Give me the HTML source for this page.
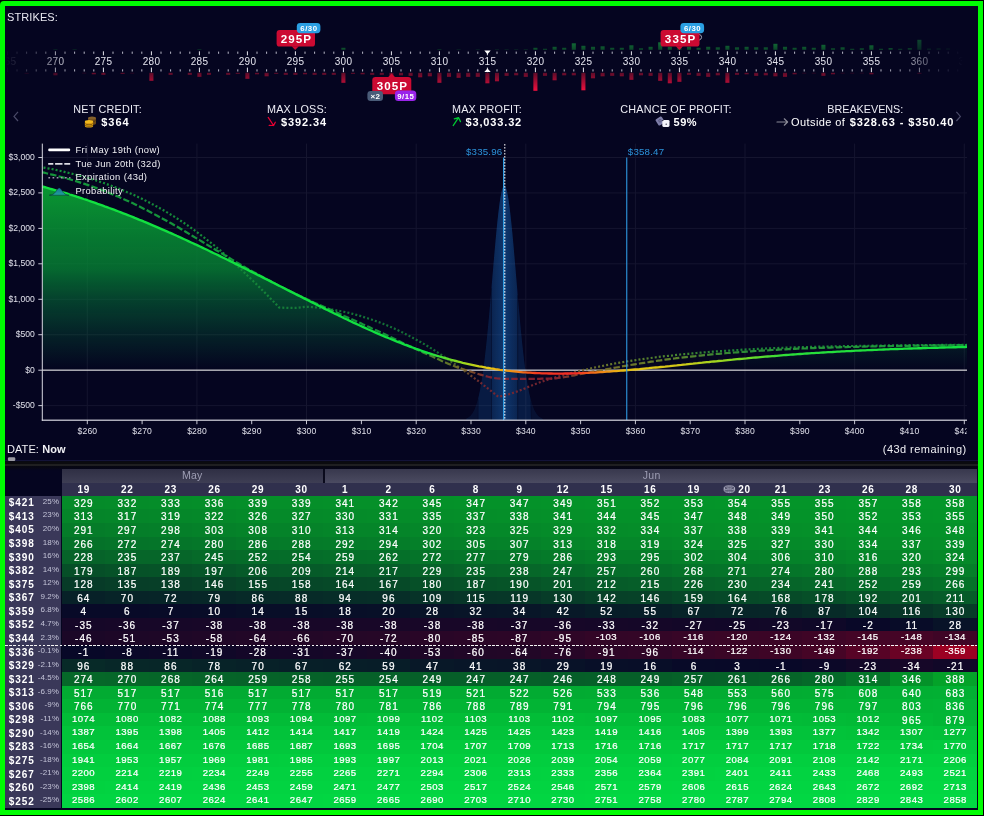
<!DOCTYPE html>
<html><head><meta charset="utf-8"><title>Strategy</title><style>
html,body{margin:0;padding:0;background:#000;}
body{width:984px;height:816px;overflow:hidden;position:relative;font-family:"Liberation Sans", sans-serif;color:#fff;}
#frame{position:absolute;left:0;top:1px;width:973px;height:804px;border:5px solid #00fd02;border-radius:4px 0 0 0;background:#050520;}
#top{position:absolute;left:0;top:0;}
.c{position:absolute;text-align:center;-webkit-text-stroke:.22px #fff;font-size:10px;letter-spacing:1.05px;text-indent:1px;white-space:nowrap;overflow:hidden;}
.c.s{font-size:9.6px;letter-spacing:.48px;text-indent:.48px;}
.rl{position:absolute;left:5.4px;width:56.1px;background:#3a3859;}
.rl b{position:absolute;left:3.4px;font-size:10px;letter-spacing:.95px;font-weight:bold;}
.rl i{position:absolute;right:2.4px;font-style:normal;font-size:8px;color:#c4c4d8;letter-spacing:.1px;}
.dh{position:absolute;text-align:center;font-weight:bold;font-size:10px;letter-spacing:.7px;text-indent:.7px;}
svg text{font-family:"Liberation Sans", sans-serif;}
#wrap{position:absolute;left:0;top:0;width:984px;height:816px;will-change:transform;transform:translateZ(0);}
</style></head><body><div id="frame"></div><div id="wrap">
<svg id="top" width="984" height="816" viewBox="0 0 984 816">
<defs>
<linearGradient id="rb" gradientUnits="userSpaceOnUse" x1="0" y1="72" x2="0" y2="91"><stop offset="0" stop-color="#5c0c29"/><stop offset="1" stop-color="#ff1040"/></linearGradient>
<linearGradient id="gb" gradientUnits="userSpaceOnUse" x1="0" y1="39" x2="0" y2="50"><stop offset="0" stop-color="#17853e"/><stop offset="1" stop-color="#0c4a2a"/></linearGradient>
<linearGradient id="fade" x1="0" y1="0" x2="1" y2="0"><stop offset="0" stop-color="#fff" stop-opacity="0"/><stop offset="0.075" stop-color="#fff" stop-opacity="1"/><stop offset="0.9" stop-color="#fff" stop-opacity="1"/><stop offset="0.985" stop-color="#fff" stop-opacity="0"/></linearGradient>
<mask id="fm" maskUnits="userSpaceOnUse" x="0" y="0" width="984" height="140"><rect x="5" y="0" width="973" height="140" fill="url(#fade)"/></mask>
</defs>
<text x="7" y="20.6" font-size="11" fill="#e8e8f0" letter-spacing="0.1">STRIKES:</text>
<g mask="url(#fm)">
<rect x="-21.90" y="51.6" width="1" height="2.2" fill="#b9b9c8"/>
<rect x="-21.90" y="69.3" width="1" height="2.2" fill="#b9b9c8"/>
<rect x="-12.30" y="51.6" width="1" height="2.2" fill="#b9b9c8"/>
<rect x="-12.30" y="69.3" width="1" height="2.2" fill="#b9b9c8"/>
<rect x="-2.70" y="51.6" width="1" height="2.2" fill="#b9b9c8"/>
<rect x="-2.70" y="69.3" width="1" height="2.2" fill="#b9b9c8"/>
<rect x="6.90" y="51.3" width="1" height="4" fill="#e6e6ee"/>
<rect x="6.90" y="67.6" width="1" height="4.6" fill="#e6e6ee"/>
<text x="7.60" y="65.2" font-size="10" text-anchor="middle" fill="#e4e4ee" letter-spacing="0.4">265</text>
<rect x="16.50" y="51.6" width="1" height="2.2" fill="#b9b9c8"/>
<rect x="16.50" y="69.3" width="1" height="2.2" fill="#b9b9c8"/>
<rect x="26.10" y="51.6" width="1" height="2.2" fill="#b9b9c8"/>
<rect x="26.10" y="69.3" width="1" height="2.2" fill="#b9b9c8"/>
<rect x="35.70" y="51.6" width="1" height="2.2" fill="#b9b9c8"/>
<rect x="35.70" y="69.3" width="1" height="2.2" fill="#b9b9c8"/>
<rect x="45.30" y="51.6" width="1" height="2.2" fill="#b9b9c8"/>
<rect x="45.30" y="69.3" width="1" height="2.2" fill="#b9b9c8"/>
<rect x="54.90" y="51.3" width="1" height="4" fill="#e6e6ee"/>
<rect x="54.90" y="67.6" width="1" height="4.6" fill="#e6e6ee"/>
<text x="55.60" y="65.2" font-size="10" text-anchor="middle" fill="#e4e4ee" letter-spacing="0.4">270</text>
<rect x="64.50" y="51.6" width="1" height="2.2" fill="#b9b9c8"/>
<rect x="64.50" y="69.3" width="1" height="2.2" fill="#b9b9c8"/>
<rect x="74.10" y="51.6" width="1" height="2.2" fill="#b9b9c8"/>
<rect x="74.10" y="69.3" width="1" height="2.2" fill="#b9b9c8"/>
<rect x="83.70" y="51.6" width="1" height="2.2" fill="#b9b9c8"/>
<rect x="83.70" y="69.3" width="1" height="2.2" fill="#b9b9c8"/>
<rect x="93.30" y="51.6" width="1" height="2.2" fill="#b9b9c8"/>
<rect x="93.30" y="69.3" width="1" height="2.2" fill="#b9b9c8"/>
<rect x="102.90" y="51.3" width="1" height="4" fill="#e6e6ee"/>
<rect x="102.90" y="67.6" width="1" height="4.6" fill="#e6e6ee"/>
<text x="103.60" y="65.2" font-size="10" text-anchor="middle" fill="#e4e4ee" letter-spacing="0.4">275</text>
<rect x="112.50" y="51.6" width="1" height="2.2" fill="#b9b9c8"/>
<rect x="112.50" y="69.3" width="1" height="2.2" fill="#b9b9c8"/>
<rect x="122.10" y="51.6" width="1" height="2.2" fill="#b9b9c8"/>
<rect x="122.10" y="69.3" width="1" height="2.2" fill="#b9b9c8"/>
<rect x="131.70" y="51.6" width="1" height="2.2" fill="#b9b9c8"/>
<rect x="131.70" y="69.3" width="1" height="2.2" fill="#b9b9c8"/>
<rect x="141.30" y="51.6" width="1" height="2.2" fill="#b9b9c8"/>
<rect x="141.30" y="69.3" width="1" height="2.2" fill="#b9b9c8"/>
<rect x="150.90" y="51.3" width="1" height="4" fill="#e6e6ee"/>
<rect x="150.90" y="67.6" width="1" height="4.6" fill="#e6e6ee"/>
<text x="151.60" y="65.2" font-size="10" text-anchor="middle" fill="#e4e4ee" letter-spacing="0.4">280</text>
<rect x="160.50" y="51.6" width="1" height="2.2" fill="#b9b9c8"/>
<rect x="160.50" y="69.3" width="1" height="2.2" fill="#b9b9c8"/>
<rect x="170.10" y="51.6" width="1" height="2.2" fill="#b9b9c8"/>
<rect x="170.10" y="69.3" width="1" height="2.2" fill="#b9b9c8"/>
<rect x="179.70" y="51.6" width="1" height="2.2" fill="#b9b9c8"/>
<rect x="179.70" y="69.3" width="1" height="2.2" fill="#b9b9c8"/>
<rect x="189.30" y="51.6" width="1" height="2.2" fill="#b9b9c8"/>
<rect x="189.30" y="69.3" width="1" height="2.2" fill="#b9b9c8"/>
<rect x="198.90" y="51.3" width="1" height="4" fill="#e6e6ee"/>
<rect x="198.90" y="67.6" width="1" height="4.6" fill="#e6e6ee"/>
<text x="199.60" y="65.2" font-size="10" text-anchor="middle" fill="#e4e4ee" letter-spacing="0.4">285</text>
<rect x="208.50" y="51.6" width="1" height="2.2" fill="#b9b9c8"/>
<rect x="208.50" y="69.3" width="1" height="2.2" fill="#b9b9c8"/>
<rect x="218.10" y="51.6" width="1" height="2.2" fill="#b9b9c8"/>
<rect x="218.10" y="69.3" width="1" height="2.2" fill="#b9b9c8"/>
<rect x="227.70" y="51.6" width="1" height="2.2" fill="#b9b9c8"/>
<rect x="227.70" y="69.3" width="1" height="2.2" fill="#b9b9c8"/>
<rect x="237.30" y="51.6" width="1" height="2.2" fill="#b9b9c8"/>
<rect x="237.30" y="69.3" width="1" height="2.2" fill="#b9b9c8"/>
<rect x="246.90" y="51.3" width="1" height="4" fill="#e6e6ee"/>
<rect x="246.90" y="67.6" width="1" height="4.6" fill="#e6e6ee"/>
<text x="247.60" y="65.2" font-size="10" text-anchor="middle" fill="#e4e4ee" letter-spacing="0.4">290</text>
<rect x="256.50" y="51.6" width="1" height="2.2" fill="#b9b9c8"/>
<rect x="256.50" y="69.3" width="1" height="2.2" fill="#b9b9c8"/>
<rect x="266.10" y="51.6" width="1" height="2.2" fill="#b9b9c8"/>
<rect x="266.10" y="69.3" width="1" height="2.2" fill="#b9b9c8"/>
<rect x="275.70" y="51.6" width="1" height="2.2" fill="#b9b9c8"/>
<rect x="275.70" y="69.3" width="1" height="2.2" fill="#b9b9c8"/>
<rect x="285.30" y="51.6" width="1" height="2.2" fill="#b9b9c8"/>
<rect x="285.30" y="69.3" width="1" height="2.2" fill="#b9b9c8"/>
<rect x="294.90" y="51.3" width="1" height="4" fill="#e6e6ee"/>
<rect x="294.90" y="67.6" width="1" height="4.6" fill="#e6e6ee"/>
<text x="295.60" y="65.2" font-size="10" text-anchor="middle" fill="#e4e4ee" letter-spacing="0.4">295</text>
<rect x="304.50" y="51.6" width="1" height="2.2" fill="#b9b9c8"/>
<rect x="304.50" y="69.3" width="1" height="2.2" fill="#b9b9c8"/>
<rect x="314.10" y="51.6" width="1" height="2.2" fill="#b9b9c8"/>
<rect x="314.10" y="69.3" width="1" height="2.2" fill="#b9b9c8"/>
<rect x="323.70" y="51.6" width="1" height="2.2" fill="#b9b9c8"/>
<rect x="323.70" y="69.3" width="1" height="2.2" fill="#b9b9c8"/>
<rect x="333.30" y="51.6" width="1" height="2.2" fill="#b9b9c8"/>
<rect x="333.30" y="69.3" width="1" height="2.2" fill="#b9b9c8"/>
<rect x="342.90" y="51.3" width="1" height="4" fill="#e6e6ee"/>
<rect x="342.90" y="67.6" width="1" height="4.6" fill="#e6e6ee"/>
<text x="343.60" y="65.2" font-size="10" text-anchor="middle" fill="#e4e4ee" letter-spacing="0.4">300</text>
<rect x="352.50" y="51.6" width="1" height="2.2" fill="#b9b9c8"/>
<rect x="352.50" y="69.3" width="1" height="2.2" fill="#b9b9c8"/>
<rect x="362.10" y="51.6" width="1" height="2.2" fill="#b9b9c8"/>
<rect x="362.10" y="69.3" width="1" height="2.2" fill="#b9b9c8"/>
<rect x="371.70" y="51.6" width="1" height="2.2" fill="#b9b9c8"/>
<rect x="371.70" y="69.3" width="1" height="2.2" fill="#b9b9c8"/>
<rect x="381.30" y="51.6" width="1" height="2.2" fill="#b9b9c8"/>
<rect x="381.30" y="69.3" width="1" height="2.2" fill="#b9b9c8"/>
<rect x="390.90" y="51.3" width="1" height="4" fill="#e6e6ee"/>
<rect x="390.90" y="67.6" width="1" height="4.6" fill="#e6e6ee"/>
<text x="391.60" y="65.2" font-size="10" text-anchor="middle" fill="#e4e4ee" letter-spacing="0.4">305</text>
<rect x="400.50" y="51.6" width="1" height="2.2" fill="#b9b9c8"/>
<rect x="400.50" y="69.3" width="1" height="2.2" fill="#b9b9c8"/>
<rect x="410.10" y="51.6" width="1" height="2.2" fill="#b9b9c8"/>
<rect x="410.10" y="69.3" width="1" height="2.2" fill="#b9b9c8"/>
<rect x="419.70" y="51.6" width="1" height="2.2" fill="#b9b9c8"/>
<rect x="419.70" y="69.3" width="1" height="2.2" fill="#b9b9c8"/>
<rect x="429.30" y="51.6" width="1" height="2.2" fill="#b9b9c8"/>
<rect x="429.30" y="69.3" width="1" height="2.2" fill="#b9b9c8"/>
<rect x="438.90" y="51.3" width="1" height="4" fill="#e6e6ee"/>
<rect x="438.90" y="67.6" width="1" height="4.6" fill="#e6e6ee"/>
<text x="439.60" y="65.2" font-size="10" text-anchor="middle" fill="#e4e4ee" letter-spacing="0.4">310</text>
<rect x="448.50" y="51.6" width="1" height="2.2" fill="#b9b9c8"/>
<rect x="448.50" y="69.3" width="1" height="2.2" fill="#b9b9c8"/>
<rect x="458.10" y="51.6" width="1" height="2.2" fill="#b9b9c8"/>
<rect x="458.10" y="69.3" width="1" height="2.2" fill="#b9b9c8"/>
<rect x="467.70" y="51.6" width="1" height="2.2" fill="#b9b9c8"/>
<rect x="467.70" y="69.3" width="1" height="2.2" fill="#b9b9c8"/>
<rect x="477.30" y="51.6" width="1" height="2.2" fill="#b9b9c8"/>
<rect x="477.30" y="69.3" width="1" height="2.2" fill="#b9b9c8"/>
<rect x="486.90" y="51.3" width="1" height="4" fill="#e6e6ee"/>
<rect x="486.90" y="67.6" width="1" height="4.6" fill="#e6e6ee"/>
<text x="487.60" y="65.2" font-size="10" text-anchor="middle" fill="#e4e4ee" letter-spacing="0.4">315</text>
<rect x="496.50" y="51.6" width="1" height="2.2" fill="#b9b9c8"/>
<rect x="496.50" y="69.3" width="1" height="2.2" fill="#b9b9c8"/>
<rect x="506.10" y="51.6" width="1" height="2.2" fill="#b9b9c8"/>
<rect x="506.10" y="69.3" width="1" height="2.2" fill="#b9b9c8"/>
<rect x="515.70" y="51.6" width="1" height="2.2" fill="#b9b9c8"/>
<rect x="515.70" y="69.3" width="1" height="2.2" fill="#b9b9c8"/>
<rect x="525.30" y="51.6" width="1" height="2.2" fill="#b9b9c8"/>
<rect x="525.30" y="69.3" width="1" height="2.2" fill="#b9b9c8"/>
<rect x="534.90" y="51.3" width="1" height="4" fill="#e6e6ee"/>
<rect x="534.90" y="67.6" width="1" height="4.6" fill="#e6e6ee"/>
<text x="535.60" y="65.2" font-size="10" text-anchor="middle" fill="#e4e4ee" letter-spacing="0.4">320</text>
<rect x="544.50" y="51.6" width="1" height="2.2" fill="#b9b9c8"/>
<rect x="544.50" y="69.3" width="1" height="2.2" fill="#b9b9c8"/>
<rect x="554.10" y="51.6" width="1" height="2.2" fill="#b9b9c8"/>
<rect x="554.10" y="69.3" width="1" height="2.2" fill="#b9b9c8"/>
<rect x="563.70" y="51.6" width="1" height="2.2" fill="#b9b9c8"/>
<rect x="563.70" y="69.3" width="1" height="2.2" fill="#b9b9c8"/>
<rect x="573.30" y="51.6" width="1" height="2.2" fill="#b9b9c8"/>
<rect x="573.30" y="69.3" width="1" height="2.2" fill="#b9b9c8"/>
<rect x="582.90" y="51.3" width="1" height="4" fill="#e6e6ee"/>
<rect x="582.90" y="67.6" width="1" height="4.6" fill="#e6e6ee"/>
<text x="583.60" y="65.2" font-size="10" text-anchor="middle" fill="#e4e4ee" letter-spacing="0.4">325</text>
<rect x="592.50" y="51.6" width="1" height="2.2" fill="#b9b9c8"/>
<rect x="592.50" y="69.3" width="1" height="2.2" fill="#b9b9c8"/>
<rect x="602.10" y="51.6" width="1" height="2.2" fill="#b9b9c8"/>
<rect x="602.10" y="69.3" width="1" height="2.2" fill="#b9b9c8"/>
<rect x="611.70" y="51.6" width="1" height="2.2" fill="#b9b9c8"/>
<rect x="611.70" y="69.3" width="1" height="2.2" fill="#b9b9c8"/>
<rect x="621.30" y="51.6" width="1" height="2.2" fill="#b9b9c8"/>
<rect x="621.30" y="69.3" width="1" height="2.2" fill="#b9b9c8"/>
<rect x="630.90" y="51.3" width="1" height="4" fill="#e6e6ee"/>
<rect x="630.90" y="67.6" width="1" height="4.6" fill="#e6e6ee"/>
<text x="631.60" y="65.2" font-size="10" text-anchor="middle" fill="#e4e4ee" letter-spacing="0.4">330</text>
<rect x="640.50" y="51.6" width="1" height="2.2" fill="#b9b9c8"/>
<rect x="640.50" y="69.3" width="1" height="2.2" fill="#b9b9c8"/>
<rect x="650.10" y="51.6" width="1" height="2.2" fill="#b9b9c8"/>
<rect x="650.10" y="69.3" width="1" height="2.2" fill="#b9b9c8"/>
<rect x="659.70" y="51.6" width="1" height="2.2" fill="#b9b9c8"/>
<rect x="659.70" y="69.3" width="1" height="2.2" fill="#b9b9c8"/>
<rect x="669.30" y="51.6" width="1" height="2.2" fill="#b9b9c8"/>
<rect x="669.30" y="69.3" width="1" height="2.2" fill="#b9b9c8"/>
<rect x="678.90" y="51.3" width="1" height="4" fill="#e6e6ee"/>
<rect x="678.90" y="67.6" width="1" height="4.6" fill="#e6e6ee"/>
<text x="679.60" y="65.2" font-size="10" text-anchor="middle" fill="#e4e4ee" letter-spacing="0.4">335</text>
<rect x="688.50" y="51.6" width="1" height="2.2" fill="#b9b9c8"/>
<rect x="688.50" y="69.3" width="1" height="2.2" fill="#b9b9c8"/>
<rect x="698.10" y="51.6" width="1" height="2.2" fill="#b9b9c8"/>
<rect x="698.10" y="69.3" width="1" height="2.2" fill="#b9b9c8"/>
<rect x="707.70" y="51.6" width="1" height="2.2" fill="#b9b9c8"/>
<rect x="707.70" y="69.3" width="1" height="2.2" fill="#b9b9c8"/>
<rect x="717.30" y="51.6" width="1" height="2.2" fill="#b9b9c8"/>
<rect x="717.30" y="69.3" width="1" height="2.2" fill="#b9b9c8"/>
<rect x="726.90" y="51.3" width="1" height="4" fill="#e6e6ee"/>
<rect x="726.90" y="67.6" width="1" height="4.6" fill="#e6e6ee"/>
<text x="727.60" y="65.2" font-size="10" text-anchor="middle" fill="#e4e4ee" letter-spacing="0.4">340</text>
<rect x="736.50" y="51.6" width="1" height="2.2" fill="#b9b9c8"/>
<rect x="736.50" y="69.3" width="1" height="2.2" fill="#b9b9c8"/>
<rect x="746.10" y="51.6" width="1" height="2.2" fill="#b9b9c8"/>
<rect x="746.10" y="69.3" width="1" height="2.2" fill="#b9b9c8"/>
<rect x="755.70" y="51.6" width="1" height="2.2" fill="#b9b9c8"/>
<rect x="755.70" y="69.3" width="1" height="2.2" fill="#b9b9c8"/>
<rect x="765.30" y="51.6" width="1" height="2.2" fill="#b9b9c8"/>
<rect x="765.30" y="69.3" width="1" height="2.2" fill="#b9b9c8"/>
<rect x="774.90" y="51.3" width="1" height="4" fill="#e6e6ee"/>
<rect x="774.90" y="67.6" width="1" height="4.6" fill="#e6e6ee"/>
<text x="775.60" y="65.2" font-size="10" text-anchor="middle" fill="#e4e4ee" letter-spacing="0.4">345</text>
<rect x="784.50" y="51.6" width="1" height="2.2" fill="#b9b9c8"/>
<rect x="784.50" y="69.3" width="1" height="2.2" fill="#b9b9c8"/>
<rect x="794.10" y="51.6" width="1" height="2.2" fill="#b9b9c8"/>
<rect x="794.10" y="69.3" width="1" height="2.2" fill="#b9b9c8"/>
<rect x="803.70" y="51.6" width="1" height="2.2" fill="#b9b9c8"/>
<rect x="803.70" y="69.3" width="1" height="2.2" fill="#b9b9c8"/>
<rect x="813.30" y="51.6" width="1" height="2.2" fill="#b9b9c8"/>
<rect x="813.30" y="69.3" width="1" height="2.2" fill="#b9b9c8"/>
<rect x="822.90" y="51.3" width="1" height="4" fill="#e6e6ee"/>
<rect x="822.90" y="67.6" width="1" height="4.6" fill="#e6e6ee"/>
<text x="823.60" y="65.2" font-size="10" text-anchor="middle" fill="#e4e4ee" letter-spacing="0.4">350</text>
<rect x="832.50" y="51.6" width="1" height="2.2" fill="#b9b9c8"/>
<rect x="832.50" y="69.3" width="1" height="2.2" fill="#b9b9c8"/>
<rect x="842.10" y="51.6" width="1" height="2.2" fill="#b9b9c8"/>
<rect x="842.10" y="69.3" width="1" height="2.2" fill="#b9b9c8"/>
<rect x="851.70" y="51.6" width="1" height="2.2" fill="#b9b9c8"/>
<rect x="851.70" y="69.3" width="1" height="2.2" fill="#b9b9c8"/>
<rect x="861.30" y="51.6" width="1" height="2.2" fill="#b9b9c8"/>
<rect x="861.30" y="69.3" width="1" height="2.2" fill="#b9b9c8"/>
<rect x="870.90" y="51.3" width="1" height="4" fill="#e6e6ee"/>
<rect x="870.90" y="67.6" width="1" height="4.6" fill="#e6e6ee"/>
<text x="871.60" y="65.2" font-size="10" text-anchor="middle" fill="#e4e4ee" letter-spacing="0.4">355</text>
<rect x="880.50" y="51.6" width="1" height="2.2" fill="#b9b9c8"/>
<rect x="880.50" y="69.3" width="1" height="2.2" fill="#b9b9c8"/>
<rect x="890.10" y="51.6" width="1" height="2.2" fill="#b9b9c8"/>
<rect x="890.10" y="69.3" width="1" height="2.2" fill="#b9b9c8"/>
<rect x="899.70" y="51.6" width="1" height="2.2" fill="#b9b9c8"/>
<rect x="899.70" y="69.3" width="1" height="2.2" fill="#b9b9c8"/>
<rect x="909.30" y="51.6" width="1" height="2.2" fill="#b9b9c8"/>
<rect x="909.30" y="69.3" width="1" height="2.2" fill="#b9b9c8"/>
<rect x="918.90" y="51.3" width="1" height="4" fill="#e6e6ee"/>
<rect x="918.90" y="67.6" width="1" height="4.6" fill="#e6e6ee"/>
<text x="919.60" y="65.2" font-size="10" text-anchor="middle" fill="#e4e4ee" letter-spacing="0.4">360</text>
<rect x="928.50" y="51.6" width="1" height="2.2" fill="#b9b9c8"/>
<rect x="928.50" y="69.3" width="1" height="2.2" fill="#b9b9c8"/>
<rect x="938.10" y="51.6" width="1" height="2.2" fill="#b9b9c8"/>
<rect x="938.10" y="69.3" width="1" height="2.2" fill="#b9b9c8"/>
<rect x="947.70" y="51.6" width="1" height="2.2" fill="#b9b9c8"/>
<rect x="947.70" y="69.3" width="1" height="2.2" fill="#b9b9c8"/>
<rect x="957.30" y="51.6" width="1" height="2.2" fill="#b9b9c8"/>
<rect x="957.30" y="69.3" width="1" height="2.2" fill="#b9b9c8"/>
<rect x="966.90" y="51.3" width="1" height="4" fill="#e6e6ee"/>
<rect x="966.90" y="67.6" width="1" height="4.6" fill="#e6e6ee"/>
<text x="967.60" y="65.2" font-size="10" text-anchor="middle" fill="#e4e4ee" letter-spacing="0.4">365</text>
<rect x="976.50" y="51.6" width="1" height="2.2" fill="#b9b9c8"/>
<rect x="976.50" y="69.3" width="1" height="2.2" fill="#b9b9c8"/>
<rect x="986.10" y="51.6" width="1" height="2.2" fill="#b9b9c8"/>
<rect x="986.10" y="69.3" width="1" height="2.2" fill="#b9b9c8"/>
<rect x="995.70" y="51.6" width="1" height="2.2" fill="#b9b9c8"/>
<rect x="995.70" y="69.3" width="1" height="2.2" fill="#b9b9c8"/>
<rect x="1005.30" y="51.6" width="1" height="2.2" fill="#b9b9c8"/>
<rect x="1005.30" y="69.3" width="1" height="2.2" fill="#b9b9c8"/>
<rect x="1014.90" y="51.3" width="1" height="4" fill="#e6e6ee"/>
<rect x="1014.90" y="67.6" width="1" height="4.6" fill="#e6e6ee"/>
<text x="1015.60" y="65.2" font-size="10" text-anchor="middle" fill="#e4e4ee" letter-spacing="0.4">370</text>
<rect x="24.55" y="72.8" width="4.1" height="1.0" fill="url(#rb)" opacity="0.95"/>
<rect x="53.35" y="72.8" width="4.1" height="2.5" fill="url(#rb)" opacity="0.95"/>
<rect x="82.15" y="72.8" width="4.1" height="0.5" fill="url(#rb)" opacity="0.60"/>
<rect x="91.75" y="72.8" width="4.1" height="1.5" fill="url(#rb)" opacity="0.95"/>
<rect x="101.35" y="72.8" width="4.1" height="2.0" fill="url(#rb)" opacity="0.95"/>
<rect x="120.55" y="72.8" width="4.1" height="1.0" fill="url(#rb)" opacity="0.95"/>
<rect x="130.15" y="72.8" width="4.1" height="0.6" fill="url(#rb)" opacity="0.60"/>
<rect x="149.35" y="72.8" width="4.1" height="8.0" fill="url(#rb)" opacity="0.95"/>
<rect x="168.55" y="72.8" width="4.1" height="2.0" fill="url(#rb)" opacity="0.95"/>
<rect x="187.75" y="72.8" width="4.1" height="2.0" fill="url(#rb)" opacity="0.95"/>
<rect x="197.35" y="72.8" width="4.1" height="4.0" fill="url(#rb)" opacity="0.95"/>
<rect x="206.95" y="72.8" width="4.1" height="2.0" fill="url(#rb)" opacity="0.95"/>
<rect x="226.15" y="72.8" width="4.1" height="2.0" fill="url(#rb)" opacity="0.95"/>
<rect x="235.75" y="72.8" width="4.1" height="1.0" fill="url(#rb)" opacity="0.95"/>
<rect x="245.35" y="72.8" width="4.1" height="6.0" fill="url(#rb)" opacity="0.95"/>
<rect x="254.95" y="72.8" width="4.1" height="1.5" fill="url(#rb)" opacity="0.95"/>
<rect x="264.55" y="72.8" width="4.1" height="3.5" fill="url(#rb)" opacity="0.95"/>
<rect x="274.15" y="72.8" width="4.1" height="1.0" fill="url(#rb)" opacity="0.95"/>
<rect x="283.75" y="72.8" width="4.1" height="2.0" fill="url(#rb)" opacity="0.95"/>
<rect x="293.35" y="72.8" width="4.1" height="2.0" fill="url(#rb)" opacity="0.95"/>
<rect x="302.95" y="72.8" width="4.1" height="1.5" fill="url(#rb)" opacity="0.95"/>
<rect x="312.55" y="72.8" width="4.1" height="2.0" fill="url(#rb)" opacity="0.95"/>
<rect x="322.15" y="72.8" width="4.1" height="2.0" fill="url(#rb)" opacity="0.95"/>
<rect x="331.75" y="72.8" width="4.1" height="2.0" fill="url(#rb)" opacity="0.95"/>
<rect x="341.35" y="72.8" width="4.1" height="10.0" fill="url(#rb)" opacity="0.95"/>
<rect x="350.95" y="72.8" width="4.1" height="1.0" fill="url(#rb)" opacity="0.95"/>
<rect x="360.55" y="72.8" width="4.1" height="1.5" fill="url(#rb)" opacity="0.95"/>
<rect x="370.15" y="72.8" width="4.1" height="2.0" fill="url(#rb)" opacity="0.95"/>
<rect x="379.75" y="72.8" width="4.1" height="2.0" fill="url(#rb)" opacity="0.95"/>
<rect x="389.35" y="72.8" width="4.1" height="3.0" fill="url(#rb)" opacity="0.95"/>
<rect x="398.95" y="72.8" width="4.1" height="2.5" fill="url(#rb)" opacity="0.95"/>
<rect x="408.55" y="72.8" width="4.1" height="3.0" fill="url(#rb)" opacity="0.95"/>
<rect x="418.15" y="72.8" width="4.1" height="4.5" fill="url(#rb)" opacity="0.95"/>
<rect x="427.75" y="72.8" width="4.1" height="3.5" fill="url(#rb)" opacity="0.95"/>
<rect x="437.35" y="72.8" width="4.1" height="10.0" fill="url(#rb)" opacity="0.95"/>
<rect x="446.95" y="72.8" width="4.1" height="4.0" fill="url(#rb)" opacity="0.95"/>
<rect x="456.55" y="72.8" width="4.1" height="5.0" fill="url(#rb)" opacity="0.95"/>
<rect x="466.15" y="72.8" width="4.1" height="4.0" fill="url(#rb)" opacity="0.95"/>
<rect x="475.75" y="72.8" width="4.1" height="4.0" fill="url(#rb)" opacity="0.95"/>
<rect x="485.35" y="72.8" width="4.1" height="10.5" fill="url(#rb)" opacity="0.95"/>
<rect x="494.95" y="72.8" width="4.1" height="8.5" fill="url(#rb)" opacity="0.95"/>
<rect x="504.55" y="72.8" width="4.1" height="3.0" fill="url(#rb)" opacity="0.95"/>
<rect x="514.15" y="72.8" width="4.1" height="2.5" fill="url(#rb)" opacity="0.95"/>
<rect x="523.75" y="72.8" width="4.1" height="4.0" fill="url(#rb)" opacity="0.95"/>
<rect x="533.35" y="72.8" width="4.1" height="18.0" fill="url(#rb)" opacity="0.95"/>
<rect x="542.95" y="72.8" width="4.1" height="3.0" fill="url(#rb)" opacity="0.95"/>
<rect x="552.55" y="72.8" width="4.1" height="7.5" fill="url(#rb)" opacity="0.95"/>
<rect x="562.15" y="72.8" width="4.1" height="2.5" fill="url(#rb)" opacity="0.95"/>
<rect x="571.75" y="72.8" width="4.1" height="2.5" fill="url(#rb)" opacity="0.95"/>
<rect x="581.35" y="72.8" width="4.1" height="17.5" fill="url(#rb)" opacity="0.95"/>
<rect x="590.95" y="72.8" width="4.1" height="5.5" fill="url(#rb)" opacity="0.95"/>
<rect x="600.55" y="72.8" width="4.1" height="3.5" fill="url(#rb)" opacity="0.95"/>
<rect x="610.15" y="72.8" width="4.1" height="3.0" fill="url(#rb)" opacity="0.95"/>
<rect x="619.75" y="72.8" width="4.1" height="3.5" fill="url(#rb)" opacity="0.95"/>
<rect x="629.35" y="72.8" width="4.1" height="7.0" fill="url(#rb)" opacity="0.95"/>
<rect x="638.95" y="72.8" width="4.1" height="2.5" fill="url(#rb)" opacity="0.95"/>
<rect x="648.55" y="72.8" width="4.1" height="3.0" fill="url(#rb)" opacity="0.95"/>
<rect x="658.15" y="72.8" width="4.1" height="8.0" fill="url(#rb)" opacity="0.95"/>
<rect x="667.75" y="72.8" width="4.1" height="10.5" fill="url(#rb)" opacity="0.95"/>
<rect x="677.35" y="72.8" width="4.1" height="9.0" fill="url(#rb)" opacity="0.95"/>
<rect x="686.95" y="72.8" width="4.1" height="2.0" fill="url(#rb)" opacity="0.95"/>
<rect x="696.55" y="72.8" width="4.1" height="3.0" fill="url(#rb)" opacity="0.95"/>
<rect x="706.15" y="72.8" width="4.1" height="4.0" fill="url(#rb)" opacity="0.95"/>
<rect x="715.75" y="72.8" width="4.1" height="2.5" fill="url(#rb)" opacity="0.95"/>
<rect x="725.35" y="72.8" width="4.1" height="10.0" fill="url(#rb)" opacity="0.95"/>
<rect x="734.95" y="72.8" width="4.1" height="2.0" fill="url(#rb)" opacity="0.95"/>
<rect x="744.55" y="72.8" width="4.1" height="1.5" fill="url(#rb)" opacity="0.95"/>
<rect x="754.15" y="72.8" width="4.1" height="3.0" fill="url(#rb)" opacity="0.95"/>
<rect x="763.75" y="72.8" width="4.1" height="2.5" fill="url(#rb)" opacity="0.95"/>
<rect x="773.35" y="72.8" width="4.1" height="3.5" fill="url(#rb)" opacity="0.95"/>
<rect x="782.95" y="72.8" width="4.1" height="4.0" fill="url(#rb)" opacity="0.95"/>
<rect x="792.55" y="72.8" width="4.1" height="1.5" fill="url(#rb)" opacity="0.95"/>
<rect x="802.15" y="72.8" width="4.1" height="0.6" fill="url(#rb)" opacity="0.60"/>
<rect x="811.75" y="72.8" width="4.1" height="0.6" fill="url(#rb)" opacity="0.60"/>
<rect x="821.35" y="72.8" width="4.1" height="3.0" fill="url(#rb)" opacity="0.95"/>
<rect x="830.95" y="72.8" width="4.1" height="1.5" fill="url(#rb)" opacity="0.95"/>
<rect x="840.55" y="72.8" width="4.1" height="0.6" fill="url(#rb)" opacity="0.60"/>
<rect x="850.15" y="72.8" width="4.1" height="0.6" fill="url(#rb)" opacity="0.60"/>
<rect x="859.75" y="72.8" width="4.1" height="0.5" fill="url(#rb)" opacity="0.60"/>
<rect x="869.35" y="72.8" width="4.1" height="1.5" fill="url(#rb)" opacity="0.95"/>
<rect x="917.35" y="72.8" width="4.1" height="1.0" fill="url(#rb)" opacity="0.95"/>
<rect x="53.35" y="49.0" width="4.1" height="0.8" fill="url(#gb)" opacity="0.60"/>
<rect x="72.55" y="49.2" width="4.1" height="0.6" fill="url(#gb)" opacity="0.60"/>
<rect x="197.35" y="49.0" width="4.1" height="0.8" fill="url(#gb)" opacity="0.60"/>
<rect x="341.35" y="47.8" width="4.1" height="2.0" fill="url(#gb)" opacity="0.95"/>
<rect x="437.35" y="49.0" width="4.1" height="0.8" fill="url(#gb)" opacity="0.60"/>
<rect x="456.55" y="49.3" width="4.1" height="0.5" fill="url(#gb)" opacity="0.60"/>
<rect x="475.75" y="49.3" width="4.1" height="0.5" fill="url(#gb)" opacity="0.60"/>
<rect x="494.95" y="49.3" width="4.1" height="0.5" fill="url(#gb)" opacity="0.60"/>
<rect x="504.55" y="49.3" width="4.1" height="0.5" fill="url(#gb)" opacity="0.60"/>
<rect x="514.15" y="49.3" width="4.1" height="0.5" fill="url(#gb)" opacity="0.60"/>
<rect x="523.75" y="49.2" width="4.1" height="0.6" fill="url(#gb)" opacity="0.60"/>
<rect x="533.35" y="47.8" width="4.1" height="2.0" fill="url(#gb)" opacity="0.95"/>
<rect x="542.95" y="48.8" width="4.1" height="1.0" fill="url(#gb)" opacity="0.95"/>
<rect x="552.55" y="46.8" width="4.1" height="3.0" fill="url(#gb)" opacity="0.95"/>
<rect x="562.15" y="47.8" width="4.1" height="2.0" fill="url(#gb)" opacity="0.95"/>
<rect x="571.75" y="43.3" width="4.1" height="6.5" fill="url(#gb)" opacity="0.95"/>
<rect x="581.35" y="45.8" width="4.1" height="4.0" fill="url(#gb)" opacity="0.95"/>
<rect x="590.95" y="46.8" width="4.1" height="3.0" fill="url(#gb)" opacity="0.95"/>
<rect x="600.55" y="46.3" width="4.1" height="3.5" fill="url(#gb)" opacity="0.95"/>
<rect x="610.15" y="47.8" width="4.1" height="2.0" fill="url(#gb)" opacity="0.95"/>
<rect x="619.75" y="47.8" width="4.1" height="2.0" fill="url(#gb)" opacity="0.95"/>
<rect x="629.35" y="45.3" width="4.1" height="4.5" fill="url(#gb)" opacity="0.95"/>
<rect x="638.95" y="48.3" width="4.1" height="1.5" fill="url(#gb)" opacity="0.95"/>
<rect x="648.55" y="46.8" width="4.1" height="3.0" fill="url(#gb)" opacity="0.95"/>
<rect x="658.15" y="42.3" width="4.1" height="7.5" fill="url(#gb)" opacity="0.95"/>
<rect x="667.75" y="46.8" width="4.1" height="3.0" fill="url(#gb)" opacity="0.95"/>
<rect x="677.35" y="46.8" width="4.1" height="3.0" fill="url(#gb)" opacity="0.95"/>
<rect x="686.95" y="46.8" width="4.1" height="3.0" fill="url(#gb)" opacity="0.95"/>
<rect x="696.55" y="47.8" width="4.1" height="2.0" fill="url(#gb)" opacity="0.95"/>
<rect x="706.15" y="46.8" width="4.1" height="3.0" fill="url(#gb)" opacity="0.95"/>
<rect x="715.75" y="47.3" width="4.1" height="2.5" fill="url(#gb)" opacity="0.95"/>
<rect x="725.35" y="45.8" width="4.1" height="4.0" fill="url(#gb)" opacity="0.95"/>
<rect x="734.95" y="47.3" width="4.1" height="2.5" fill="url(#gb)" opacity="0.95"/>
<rect x="744.55" y="46.8" width="4.1" height="3.0" fill="url(#gb)" opacity="0.95"/>
<rect x="754.15" y="47.3" width="4.1" height="2.5" fill="url(#gb)" opacity="0.95"/>
<rect x="763.75" y="47.3" width="4.1" height="2.5" fill="url(#gb)" opacity="0.95"/>
<rect x="773.35" y="43.8" width="4.1" height="6.0" fill="url(#gb)" opacity="0.95"/>
<rect x="782.95" y="46.8" width="4.1" height="3.0" fill="url(#gb)" opacity="0.95"/>
<rect x="792.55" y="47.8" width="4.1" height="2.0" fill="url(#gb)" opacity="0.95"/>
<rect x="802.15" y="46.8" width="4.1" height="3.0" fill="url(#gb)" opacity="0.95"/>
<rect x="811.75" y="47.8" width="4.1" height="2.0" fill="url(#gb)" opacity="0.95"/>
<rect x="821.35" y="44.8" width="4.1" height="5.0" fill="url(#gb)" opacity="0.95"/>
<rect x="830.95" y="48.3" width="4.1" height="1.5" fill="url(#gb)" opacity="0.95"/>
<rect x="840.55" y="47.3" width="4.1" height="2.5" fill="url(#gb)" opacity="0.95"/>
<rect x="850.15" y="48.8" width="4.1" height="1.0" fill="url(#gb)" opacity="0.95"/>
<rect x="859.75" y="48.3" width="4.1" height="1.5" fill="url(#gb)" opacity="0.95"/>
<rect x="869.35" y="45.3" width="4.1" height="4.5" fill="url(#gb)" opacity="0.95"/>
<rect x="878.95" y="48.8" width="4.1" height="1.0" fill="url(#gb)" opacity="0.95"/>
<rect x="888.55" y="48.0" width="4.1" height="1.8" fill="url(#gb)" opacity="0.95"/>
<rect x="898.15" y="48.8" width="4.1" height="1.0" fill="url(#gb)" opacity="0.95"/>
<rect x="907.75" y="48.0" width="4.1" height="1.8" fill="url(#gb)" opacity="0.95"/>
<rect x="917.35" y="39.8" width="4.1" height="10.0" fill="url(#gb)" opacity="0.95"/>
<rect x="926.95" y="48.6" width="4.1" height="1.2" fill="url(#gb)" opacity="0.95"/>
<rect x="936.55" y="48.3" width="4.1" height="1.5" fill="url(#gb)" opacity="0.95"/>
<rect x="946.15" y="48.3" width="4.1" height="1.5" fill="url(#gb)" opacity="0.95"/>
<rect x="955.75" y="49.0" width="4.1" height="0.8" fill="url(#gb)" opacity="0.60"/>
</g>
<path d="M484.3 50.6h6.4l-3.2 3.6z" fill="#fff"/>
<path d="M484.3 72h6.4l-3.2-3.6z" fill="#fff"/>
<path d="M291.6 46.3h7.2l-3.6 3.7z" fill="#cc0a32"/>
<rect x="276.6" y="30.0" width="38.4" height="16.6" rx="3.2" fill="#cc0a32"/>
<text x="296.4" y="42.6" font-size="11.6" text-anchor="middle" fill="#fff" font-weight="bold" letter-spacing="1.10">295P</text>
<rect x="296.8" y="23.0" width="23.6" height="10.2" rx="3.4" fill="#2a9fe2"/>
<text x="308.9" y="30.9" font-size="7.8" text-anchor="middle" fill="#fff" font-weight="bold" letter-spacing="0.50">6/30</text>
<path d="M699 34.4q2.8.5 2.6 3-.2 2-2.6 2.8" stroke="#b4b4c4" stroke-width=".9" fill="none"/>
<path d="M675.8 46.3h7.2l-3.6 3.7z" fill="#cc0a32"/>
<rect x="660.6" y="30.0" width="38.9" height="16.6" rx="3.2" fill="#cc0a32"/>
<text x="680.6" y="42.6" font-size="11.6" text-anchor="middle" fill="#fff" font-weight="bold" letter-spacing="1.10">335P</text>
<rect x="680.4" y="23.0" width="23.7" height="10.2" rx="3.4" fill="#2a9fe2"/>
<text x="692.5" y="30.9" font-size="7.8" text-anchor="middle" fill="#fff" font-weight="bold" letter-spacing="0.50">6/30</text>
<path d="M388 77.3h7.2l-3.6-3.7z" fill="#cc0a32"/>
<rect x="372.3" y="77.0" width="39.0" height="17.2" rx="3.2" fill="#cc0a32"/>
<text x="392.4" y="89.7" font-size="11.6" text-anchor="middle" fill="#fff" font-weight="bold" letter-spacing="1.10">305P</text>
<rect x="367.4" y="91.1" width="15.6" height="9.9" rx="3.3" fill="#4a5c78"/>
<text x="375.3" y="98.8" font-size="8.0" text-anchor="middle" fill="#fff" font-weight="bold" letter-spacing="0.30">×2</text>
<rect x="394.9" y="90.6" width="21.4" height="10.5" rx="3.5" fill="#9a24ea"/>
<text x="405.8" y="98.7" font-size="7.8" text-anchor="middle" fill="#fff" font-weight="bold" letter-spacing="0.45">9/15</text>
<text x="107.6" y="113.1" font-size="10.8" text-anchor="middle" fill="#ececf4" letter-spacing="0.20">NET CREDIT:</text>
<text x="297.0" y="113.1" font-size="10.8" text-anchor="middle" fill="#ececf4" letter-spacing="0.20">MAX LOSS:</text>
<text x="487.0" y="113.1" font-size="10.8" text-anchor="middle" fill="#ececf4" letter-spacing="0.20">MAX PROFIT:</text>
<text x="676.0" y="113.1" font-size="10.8" text-anchor="middle" fill="#ececf4" letter-spacing="0.20">CHANCE OF PROFIT:</text>
<text x="865.3" y="113.1" font-size="10.8" text-anchor="middle" fill="#ececf4" letter-spacing="-0.02">BREAKEVENS:</text>
<text x="101.2" y="126.4" font-size="11" font-weight="bold" fill="#fff" letter-spacing="1">$364</text>
<text x="281" y="126.4" font-size="11" font-weight="bold" fill="#fff" letter-spacing="0.9">$392.34</text>
<text x="465.5" y="126.4" font-size="11" font-weight="bold" fill="#fff" letter-spacing="0.85">$3,033.32</text>
<text x="673.6" y="126.4" font-size="11" font-weight="bold" fill="#fff" letter-spacing="0.5">59%</text>
<text x="791" y="126.4" font-size="11" fill="#fff" letter-spacing="0.42">Outside of <tspan font-weight="bold" letter-spacing="0.9" dx="0.8">$328.63 - $350.40</tspan></text>
<g transform="translate(84.6,116.2)"><rect x="3.4" y="1.8" width="8" height="5.2" fill="#6a4818"/><ellipse cx="7.4" cy="7" rx="4" ry="1.6" fill="#6a4818"/><ellipse cx="7.4" cy="1.8" rx="4" ry="1.6" fill="#84602a"/><path d="M3.4 3.9a4 1.6 0 0 0 8 0" stroke="#4a3210" stroke-width=".6" fill="none"/><rect x=".3" y="5.3" width="8.2" height="4.6" fill="#dc9c10"/><ellipse cx="4.4" cy="9.9" rx="4.1" ry="1.5" fill="#dc9c10"/><ellipse cx="4.4" cy="5.3" rx="4.1" ry="1.5" fill="#f2ba1e"/><path d="M.3 7a4.1 1.5 0 0 0 8.2 0M.3 8.6a4.1 1.5 0 0 0 8.2 0" stroke="#6e4e08" stroke-width=".7" fill="none"/></g>
<path d="M268.2 117.4L273.6 125.5M269.2 125.4L273.6 125.5L275.3 122.2" stroke="#e60032" stroke-width="1.25" fill="none" stroke-linecap="round" stroke-linejoin="round"/>
<path d="M453.2 125.6L458.5 117.6M454.3 118.9L458.5 117.6L460.5 121.6" stroke="#00c832" stroke-width="1.25" fill="none" stroke-linecap="round" stroke-linejoin="round"/>
<g><rect x="-3.6" y="-3.6" width="7.2" height="7.2" rx="1.1" fill="#7d7da8" transform="translate(660.1,121) rotate(-32)"/><circle cx="660" cy="120.8" r="1.3" fill="none" stroke="#4c4c74" stroke-width=".7"/><rect x="662.3" y="119.9" width="7.2" height="7" rx="1.3" fill="#f4f4fa"/><path d="M662.3 121.4l1.6-1.5h-1.6z" fill="#050520"/><circle cx="666.2" cy="124.2" r=".65" fill="#1a1a30"/></g>
<path d="M777 122h10.4M784.3 118.8l3.3 3.2-3.3 3.2" stroke="#8c8c98" stroke-width="1.2" fill="none" stroke-linecap="round" stroke-linejoin="round"/>
<path d="M18 111.8l-4 4.6 4 4.6" stroke="#4a4a68" stroke-width="1.2" fill="none"/>
<path d="M956.4 111.8l4 4.6-4 4.6" stroke="#4a4a68" stroke-width="1.2" fill="none"/>
<rect x="42.3" y="157.0" width="924.7" height="1" fill="#15152f"/>
<rect x="38.3" y="157.0" width="4" height="1" fill="#c8c8d4"/>
<rect x="42.3" y="192.4" width="924.7" height="1" fill="#15152f"/>
<rect x="38.3" y="192.4" width="4" height="1" fill="#c8c8d4"/>
<rect x="42.3" y="227.9" width="924.7" height="1" fill="#15152f"/>
<rect x="38.3" y="227.9" width="4" height="1" fill="#c8c8d4"/>
<rect x="42.3" y="263.3" width="924.7" height="1" fill="#15152f"/>
<rect x="38.3" y="263.3" width="4" height="1" fill="#c8c8d4"/>
<rect x="42.3" y="298.8" width="924.7" height="1" fill="#15152f"/>
<rect x="38.3" y="298.8" width="4" height="1" fill="#c8c8d4"/>
<rect x="42.3" y="334.2" width="924.7" height="1" fill="#15152f"/>
<rect x="38.3" y="334.2" width="4" height="1" fill="#c8c8d4"/>
<rect x="42.3" y="405.1" width="924.7" height="1" fill="#15152f"/>
<rect x="38.3" y="405.1" width="4" height="1" fill="#c8c8d4"/>
<rect x="86.8" y="143.6" width="1" height="276.6" fill="#15152f"/>
<rect x="86.8" y="420.2" width="1" height="4" fill="#c8c8d4"/>
<rect x="141.6" y="420.2" width="1" height="4" fill="#c8c8d4"/>
<rect x="196.4" y="143.6" width="1" height="276.6" fill="#15152f"/>
<rect x="196.4" y="420.2" width="1" height="4" fill="#c8c8d4"/>
<rect x="251.2" y="420.2" width="1" height="4" fill="#c8c8d4"/>
<rect x="306.0" y="143.6" width="1" height="276.6" fill="#15152f"/>
<rect x="306.0" y="420.2" width="1" height="4" fill="#c8c8d4"/>
<rect x="360.9" y="420.2" width="1" height="4" fill="#c8c8d4"/>
<rect x="415.7" y="143.6" width="1" height="276.6" fill="#15152f"/>
<rect x="415.7" y="420.2" width="1" height="4" fill="#c8c8d4"/>
<rect x="470.5" y="420.2" width="1" height="4" fill="#c8c8d4"/>
<rect x="525.3" y="143.6" width="1" height="276.6" fill="#15152f"/>
<rect x="525.3" y="420.2" width="1" height="4" fill="#c8c8d4"/>
<rect x="580.1" y="420.2" width="1" height="4" fill="#c8c8d4"/>
<rect x="634.9" y="143.6" width="1" height="276.6" fill="#15152f"/>
<rect x="634.9" y="420.2" width="1" height="4" fill="#c8c8d4"/>
<rect x="689.7" y="420.2" width="1" height="4" fill="#c8c8d4"/>
<rect x="744.5" y="143.6" width="1" height="276.6" fill="#15152f"/>
<rect x="744.5" y="420.2" width="1" height="4" fill="#c8c8d4"/>
<rect x="799.3" y="420.2" width="1" height="4" fill="#c8c8d4"/>
<rect x="854.1" y="143.6" width="1" height="276.6" fill="#15152f"/>
<rect x="854.1" y="420.2" width="1" height="4" fill="#c8c8d4"/>
<rect x="908.9" y="420.2" width="1" height="4" fill="#c8c8d4"/>
<rect x="963.8" y="143.6" width="1" height="276.6" fill="#15152f"/>
<rect x="963.8" y="420.2" width="1" height="4" fill="#c8c8d4"/>
<text x="34.8" y="159.8" font-size="8.6" text-anchor="end" fill="#e0e0ea" letter-spacing="0">$3,000</text>
<text x="34.8" y="195.2" font-size="8.6" text-anchor="end" fill="#e0e0ea" letter-spacing="0">$2,500</text>
<text x="34.8" y="230.7" font-size="8.6" text-anchor="end" fill="#e0e0ea" letter-spacing="0">$2,000</text>
<text x="34.8" y="266.1" font-size="8.6" text-anchor="end" fill="#e0e0ea" letter-spacing="0">$1,500</text>
<text x="34.8" y="301.6" font-size="8.6" text-anchor="end" fill="#e0e0ea" letter-spacing="0">$1,000</text>
<text x="34.8" y="337.1" font-size="8.6" text-anchor="end" fill="#e0e0ea" letter-spacing="0">$500</text>
<text x="34.8" y="372.5" font-size="8.6" text-anchor="end" fill="#e0e0ea" letter-spacing="0">$0</text>
<text x="34.8" y="407.9" font-size="8.6" text-anchor="end" fill="#e0e0ea" letter-spacing="0">-$500</text>
<rect x="38.3" y="369.7" width="4" height="1" fill="#c8c8d4"/>
<text x="87.4" y="433.6" font-size="8.6" text-anchor="middle" fill="#e0e0ea" letter-spacing="0.15">$260</text>
<text x="142.2" y="433.6" font-size="8.6" text-anchor="middle" fill="#e0e0ea" letter-spacing="0.15">$270</text>
<text x="197.0" y="433.6" font-size="8.6" text-anchor="middle" fill="#e0e0ea" letter-spacing="0.15">$280</text>
<text x="251.8" y="433.6" font-size="8.6" text-anchor="middle" fill="#e0e0ea" letter-spacing="0.15">$290</text>
<text x="306.6" y="433.6" font-size="8.6" text-anchor="middle" fill="#e0e0ea" letter-spacing="0.15">$300</text>
<text x="361.5" y="433.6" font-size="8.6" text-anchor="middle" fill="#e0e0ea" letter-spacing="0.15">$310</text>
<text x="416.3" y="433.6" font-size="8.6" text-anchor="middle" fill="#e0e0ea" letter-spacing="0.15">$320</text>
<text x="471.1" y="433.6" font-size="8.6" text-anchor="middle" fill="#e0e0ea" letter-spacing="0.15">$330</text>
<text x="525.9" y="433.6" font-size="8.6" text-anchor="middle" fill="#e0e0ea" letter-spacing="0.15">$340</text>
<text x="580.7" y="433.6" font-size="8.6" text-anchor="middle" fill="#e0e0ea" letter-spacing="0.15">$350</text>
<text x="635.5" y="433.6" font-size="8.6" text-anchor="middle" fill="#e0e0ea" letter-spacing="0.15">$360</text>
<text x="690.3" y="433.6" font-size="8.6" text-anchor="middle" fill="#e0e0ea" letter-spacing="0.15">$370</text>
<text x="745.1" y="433.6" font-size="8.6" text-anchor="middle" fill="#e0e0ea" letter-spacing="0.15">$380</text>
<text x="799.9" y="433.6" font-size="8.6" text-anchor="middle" fill="#e0e0ea" letter-spacing="0.15">$390</text>
<text x="854.7" y="433.6" font-size="8.6" text-anchor="middle" fill="#e0e0ea" letter-spacing="0.15">$400</text>
<text x="909.5" y="433.6" font-size="8.6" text-anchor="middle" fill="#e0e0ea" letter-spacing="0.15">$410</text>
<text x="964.4" y="433.6" font-size="8.6" text-anchor="middle" fill="#e0e0ea" letter-spacing="0.15" clip-path="url(#cpx)">$420</text>
<clipPath id="cpx"><rect x="0" y="0" width="966.6" height="816"/></clipPath>
<defs>
<linearGradient id="fillg" gradientUnits="userSpaceOnUse" x1="0" y1="186" x2="0" y2="370"><stop offset="0" stop-color="#0a9e33" stop-opacity=".95"/><stop offset=".45" stop-color="#068a35" stop-opacity=".75"/><stop offset=".62" stop-color="#057d3a" stop-opacity=".5"/><stop offset=".8" stop-color="#057d40" stop-opacity=".25"/><stop offset="1" stop-color="#057d40" stop-opacity="0"/></linearGradient>
<linearGradient id="gnow" gradientUnits="userSpaceOnUse" x1="42.3" y1="0" x2="967.0" y2="0">
<stop offset="0.0012" stop-color="#12e040"/>
<stop offset="0.4162" stop-color="#12e040"/>
<stop offset="0.4517" stop-color="#8fd820"/>
<stop offset="0.4814" stop-color="#e6c814"/>
<stop offset="0.5110" stop-color="#f28a14"/>
<stop offset="0.5347" stop-color="#f23a20"/>
<stop offset="0.5762" stop-color="#f22a24"/>
<stop offset="0.5999" stop-color="#f27a16"/>
<stop offset="0.6295" stop-color="#e6c014"/>
<stop offset="0.6888" stop-color="#d2c818"/>
<stop offset="0.7481" stop-color="#86d824"/>
<stop offset="0.8074" stop-color="#2ade3a"/>
<stop offset="1.0030" stop-color="#12e040"/>
</linearGradient>
<linearGradient id="g32" gradientUnits="userSpaceOnUse" x1="42.3" y1="0" x2="967.0" y2="0">
<stop offset="0.0012" stop-color="#17a53e"/>
<stop offset="0.3924" stop-color="#17a03c"/>
<stop offset="0.4280" stop-color="#5f8a2c"/>
<stop offset="0.4577" stop-color="#806428"/>
<stop offset="0.4814" stop-color="#8a2430"/>
<stop offset="0.5525" stop-color="#8e2030"/>
<stop offset="0.5821" stop-color="#80542a"/>
<stop offset="0.6177" stop-color="#7c7c2a"/>
<stop offset="0.6770" stop-color="#6a8c2c"/>
<stop offset="0.7599" stop-color="#2f9a38"/>
<stop offset="1.0030" stop-color="#17a53e"/>
</linearGradient>
<linearGradient id="gexp" gradientUnits="userSpaceOnUse" x1="42.3" y1="0" x2="967.0" y2="0">
<stop offset="0.0012" stop-color="#169a3c"/>
<stop offset="0.1968" stop-color="#168c3a"/>
<stop offset="0.2858" stop-color="#157c38"/>
<stop offset="0.4280" stop-color="#147036"/>
<stop offset="0.4488" stop-color="#5a6a2c"/>
<stop offset="0.4636" stop-color="#70442c"/>
<stop offset="0.4754" stop-color="#782630"/>
<stop offset="0.5584" stop-color="#782630"/>
<stop offset="0.5732" stop-color="#70442c"/>
<stop offset="0.5881" stop-color="#6a6a2c"/>
<stop offset="0.6177" stop-color="#6a7e2c"/>
<stop offset="0.6770" stop-color="#4f8a30"/>
<stop offset="0.7481" stop-color="#1f8a38"/>
<stop offset="1.0030" stop-color="#158a38"/>
</linearGradient>
<linearGradient id="bellc" gradientUnits="userSpaceOnUse" x1="491.7" y1="0" x2="517.5" y2="0"><stop offset="0" stop-color="#1a64b4" stop-opacity=".12"/><stop offset=".5" stop-color="#1a64b4" stop-opacity=".38"/><stop offset="1" stop-color="#1a64b4" stop-opacity=".12"/></linearGradient>
<clipPath id="plot"><rect x="42.3" y="143.6" width="924.7" height="276.6"/></clipPath>
</defs>
<g clip-path="url(#plot)">
<path d="M41.8 186.4 L44.1 187.0 L46.5 187.7 L48.8 188.3 L51.1 189.0 L53.4 189.6 L55.8 190.3 L58.1 191.0 L60.4 191.6 L62.7 192.3 L65.1 193.0 L67.4 193.7 L69.7 194.5 L72.0 195.2 L74.4 195.9 L76.7 196.7 L79.0 197.4 L81.3 198.2 L83.7 199.0 L86.0 199.7 L88.3 200.5 L90.6 201.3 L93.0 202.1 L95.3 202.9 L97.6 203.8 L99.9 204.6 L102.3 205.4 L104.6 206.3 L106.9 207.1 L109.3 208.0 L111.6 208.8 L113.9 209.7 L116.2 210.6 L118.6 211.5 L120.9 212.4 L123.2 213.3 L125.5 214.2 L127.9 215.1 L130.2 216.0 L132.5 216.9 L134.8 217.9 L137.2 218.8 L139.5 219.8 L141.8 220.7 L144.1 221.7 L146.5 222.6 L148.8 223.6 L151.1 224.6 L153.4 225.6 L155.8 226.6 L158.1 227.6 L160.4 228.6 L162.7 229.6 L165.1 230.6 L167.4 231.6 L169.7 232.7 L172.0 233.7 L174.4 234.7 L176.7 235.8 L179.0 236.8 L181.3 237.9 L183.7 239.0 L186.0 240.0 L188.3 241.1 L190.6 242.2 L193.0 243.3 L195.3 244.3 L197.6 245.4 L200.0 246.5 L202.3 247.6 L204.6 248.7 L206.9 249.8 L209.3 251.0 L211.6 252.1 L213.9 253.2 L216.2 254.3 L218.6 255.4 L220.9 256.6 L223.2 257.7 L225.5 258.8 L227.9 260.0 L230.2 261.1 L232.5 262.3 L234.8 263.4 L237.2 264.6 L239.5 265.7 L241.8 266.9 L244.1 268.1 L246.5 269.2 L248.8 270.4 L251.1 271.6 L253.4 272.7 L255.8 273.9 L258.1 275.1 L260.4 276.2 L262.7 277.4 L265.1 278.6 L267.4 279.8 L269.7 280.9 L272.0 282.1 L274.4 283.3 L276.7 284.5 L279.0 285.7 L281.3 286.8 L283.7 288.0 L286.0 289.2 L288.3 290.4 L290.7 291.6 L293.0 292.7 L295.3 293.9 L297.6 295.1 L300.0 296.3 L302.3 297.4 L304.6 298.6 L306.9 299.8 L309.3 301.0 L311.6 302.1 L313.9 303.3 L316.2 304.5 L318.6 305.6 L320.9 306.8 L323.2 307.9 L325.5 309.1 L327.9 310.2 L330.2 311.4 L332.5 312.5 L334.8 313.7 L337.2 314.8 L339.5 315.9 L341.8 317.0 L344.1 318.2 L346.5 319.3 L348.8 320.4 L351.1 321.5 L353.4 322.6 L355.8 323.6 L358.1 324.7 L360.4 325.8 L362.7 326.8 L365.1 327.9 L367.4 329.0 L369.7 330.0 L372.0 331.0 L374.4 332.1 L376.7 333.1 L379.0 334.1 L381.4 335.1 L383.7 336.1 L386.0 337.1 L388.3 338.0 L390.7 339.0 L393.0 339.9 L395.3 340.9 L397.6 341.8 L400.0 342.7 L402.3 343.7 L404.6 344.6 L406.9 345.4 L409.3 346.3 L411.6 347.2 L413.9 348.0 L416.2 348.9 L418.6 349.7 L420.9 350.5 L423.2 351.3 L425.5 352.1 L427.9 352.9 L430.2 353.6 L432.5 354.4 L434.8 355.1 L437.2 355.8 L439.5 356.5 L441.8 357.2 L444.1 357.9 L446.5 358.5 L448.8 359.2 L451.1 359.8 L453.4 360.4 L455.8 361.0 L458.1 361.6 L460.4 362.2 L462.7 362.8 L465.1 363.3 L467.4 363.8 L469.7 364.3 L472.1 364.8 L474.4 365.3 L476.7 365.8 L479.0 366.3 L481.4 366.7 L483.7 367.1 L486.0 367.6 L488.3 368.0 L490.7 368.4 L493.0 368.7 L495.3 369.1 L497.6 369.4 L500.0 369.8 L502.3 370.1 L504.6 370.4 L506.9 370.7 L509.3 370.9 L511.6 371.2 L513.9 371.4 L516.2 371.6 L518.6 371.9 L520.9 372.1 L523.2 372.3 L525.5 372.4 L527.9 372.6 L530.2 372.7 L532.5 372.9 L534.8 373.0 L537.2 373.1 L539.5 373.2 L541.8 373.3 L544.1 373.4 L546.5 373.4 L548.8 373.5 L551.1 373.5 L553.5 373.6 L555.8 373.6 L558.1 373.6 L560.4 373.6 L562.8 373.6 L565.1 373.5 L567.4 373.5 L569.7 373.5 L572.1 373.4 L574.4 373.4 L576.7 373.3 L579.0 373.2 L581.4 373.1 L583.7 373.0 L586.0 372.9 L588.3 372.8 L590.7 372.7 L593.0 372.6 L595.3 372.5 L597.6 372.3 L600.0 372.2 L602.3 372.1 L604.6 371.9 L606.9 371.7 L609.3 371.6 L611.6 371.4 L613.9 371.2 L616.2 371.1 L618.6 370.9 L620.9 370.7 L623.2 370.5 L625.5 370.3 L627.9 370.1 L630.2 369.9 L632.5 369.7 L634.8 369.5 L637.2 369.3 L639.5 369.1 L641.8 368.8 L644.2 368.6 L646.5 368.4 L648.8 368.2 L651.1 367.9 L653.5 367.7 L655.8 367.5 L658.1 367.3 L660.4 367.0 L662.8 366.8 L665.1 366.6 L667.4 366.3 L669.7 366.1 L672.1 365.8 L674.4 365.6 L676.7 365.4 L679.0 365.1 L681.4 364.9 L683.7 364.6 L686.0 364.4 L688.3 364.1 L690.7 363.9 L693.0 363.7 L695.3 363.4 L697.6 363.2 L700.0 362.9 L702.3 362.7 L704.6 362.4 L706.9 362.2 L709.3 362.0 L711.6 361.7 L713.9 361.5 L716.2 361.3 L718.6 361.0 L720.9 360.8 L723.2 360.6 L725.5 360.3 L727.9 360.1 L730.2 359.9 L732.5 359.7 L734.9 359.4 L737.2 359.2 L739.5 359.0 L741.8 358.8 L744.2 358.6 L746.5 358.4 L748.8 358.1 L751.1 357.9 L753.5 357.7 L755.8 357.5 L758.1 357.3 L760.4 357.1 L762.8 356.9 L765.1 356.7 L767.4 356.5 L769.7 356.3 L772.1 356.1 L774.4 356.0 L776.7 355.8 L779.0 355.6 L781.4 355.4 L783.7 355.2 L786.0 355.0 L788.3 354.9 L790.7 354.7 L793.0 354.5 L795.3 354.4 L797.6 354.2 L800.0 354.0 L802.3 353.9 L804.6 353.7 L806.9 353.5 L809.3 353.4 L811.6 353.2 L813.9 353.1 L816.2 352.9 L818.6 352.8 L820.9 352.6 L823.2 352.5 L825.6 352.4 L827.9 352.2 L830.2 352.1 L832.5 352.0 L834.9 351.8 L837.2 351.7 L839.5 351.6 L841.8 351.4 L844.2 351.3 L846.5 351.2 L848.8 351.1 L851.1 351.0 L853.5 350.8 L855.8 350.7 L858.1 350.6 L860.4 350.5 L862.8 350.4 L865.1 350.3 L867.4 350.2 L869.7 350.1 L872.1 350.0 L874.4 349.9 L876.7 349.8 L879.0 349.7 L881.4 349.6 L883.7 349.5 L886.0 349.4 L888.3 349.3 L890.7 349.2 L893.0 349.1 L895.3 349.0 L897.6 349.0 L900.0 348.9 L902.3 348.8 L904.6 348.7 L906.9 348.6 L909.3 348.5 L911.6 348.5 L913.9 348.4 L916.3 348.3 L918.6 348.2 L920.9 348.2 L923.2 348.1 L925.6 348.0 L927.9 347.9 L930.2 347.9 L932.5 347.8 L934.9 347.7 L937.2 347.7 L939.5 347.6 L941.8 347.5 L944.2 347.5 L946.5 347.4 L948.8 347.4 L951.1 347.3 L953.5 347.2 L955.8 347.2 L958.1 347.1 L960.4 347.1 L962.8 347.0 L965.1 347.0 L967.4 346.9 L969.7 346.9 L969.7 370.2 L41.8 370.2 Z" fill="url(#fillg)"/>
<path d="M466.3 420.2 L466.3 418.6 L468.3 417.6 L470.3 416.0 L472.3 413.5 L474.3 409.9 L476.3 404.8 L478.3 397.8 L480.3 388.5 L482.3 376.5 L484.3 361.7 L486.3 344.0 L488.3 323.8 L490.3 301.4 L492.3 277.9 L494.3 254.4 L496.3 232.3 L498.3 213.2 L500.3 198.3 L502.3 188.8 L504.3 185.6 L506.3 188.8 L508.3 198.3 L510.3 213.2 L512.3 232.3 L514.3 254.4 L516.3 277.9 L518.3 301.4 L520.3 323.8 L522.3 344.0 L524.3 361.7 L526.3 376.5 L528.3 388.5 L530.3 397.8 L532.3 404.8 L534.3 409.9 L536.3 413.5 L538.3 416.0 L540.3 417.6 L542.3 418.6 L543.3 420.2 Z" fill="#1a64b4" opacity=".13"/>
<path d="M478.3 420.2 L478.3 397.8 L479.3 393.4 L480.3 388.5 L481.3 382.8 L482.3 376.5 L483.3 369.5 L484.3 361.7 L485.3 353.2 L486.3 344.0 L487.3 334.2 L488.3 323.8 L489.3 312.8 L490.3 301.4 L491.3 289.7 L492.3 277.9 L493.3 266.1 L494.3 254.4 L495.3 243.1 L496.3 232.3 L497.3 222.3 L498.3 213.2 L499.3 205.1 L500.3 198.3 L501.3 192.8 L502.3 188.8 L503.3 186.4 L504.3 185.6 L505.3 186.4 L506.3 188.8 L507.3 192.8 L508.3 198.3 L509.3 205.1 L510.3 213.2 L511.3 222.3 L512.3 232.3 L513.3 243.1 L514.3 254.4 L515.3 266.1 L516.3 277.9 L517.3 289.7 L518.3 301.4 L519.3 312.8 L520.3 323.8 L521.3 334.2 L522.3 344.0 L523.3 353.2 L524.3 361.7 L525.3 369.5 L526.3 376.5 L527.3 382.8 L528.3 388.5 L529.3 393.4 L530.3 397.8 L531.1 420.2 Z" fill="#1a64b4" opacity=".126"/>
<path d="M491.7 420.2 L491.7 285.0 L492.5 275.5 L493.3 266.1 L494.1 256.7 L494.9 247.6 L495.7 238.7 L496.5 230.3 L497.3 222.3 L498.1 214.9 L498.9 208.2 L499.7 202.2 L500.5 197.1 L501.3 192.8 L502.1 189.5 L502.9 187.2 L503.7 185.9 L504.5 185.6 L505.3 186.4 L506.1 188.2 L506.9 191.0 L507.7 194.8 L508.5 199.5 L509.3 205.1 L510.1 211.5 L510.9 218.5 L511.7 226.2 L512.5 234.4 L513.3 243.1 L514.1 252.1 L514.9 261.4 L515.7 270.8 L516.5 280.3 L517.3 289.7 L517.5 420.2 Z" fill="url(#bellc)"/>
<path d="M491.5 288.4V420M517.7 295.4V420" stroke="#040c26" stroke-width=".7" opacity=".75"/>
<path d="M478.2 399.2V420M531.2 402.2V420" stroke="#040c26" stroke-width=".6" opacity=".45"/>
</g>
<rect x="42.3" y="369.6" width="924.7" height="1.1" fill="#ececec"/>
<g clip-path="url(#plot)" fill="none">
<path d="M43.5 167.6 L45.4 167.9 L47.4 168.3 L49.4 168.6 L51.4 169.0 L53.4 169.4 L55.3 169.8 L57.3 170.3 L59.3 170.7 L61.3 171.1 L63.3 171.6 L65.2 172.1 L67.2 172.5 L69.2 173.0 L71.2 173.5 L73.2 174.0 L75.1 174.5 L77.1 175.1 L79.1 175.6 L81.1 176.1 L83.1 176.7 L85.0 177.2 L87.0 177.8 L89.0 178.3 L91.0 178.9 L93.0 179.5 L94.9 180.1 L96.9 180.8 L98.9 181.4 L100.9 182.1 L102.9 182.7 L104.8 183.4 L106.8 184.1 L108.8 184.9 L110.8 185.6 L112.8 186.3 L114.8 187.1 L116.7 187.9 L118.7 188.6 L120.7 189.4 L122.7 190.2 L124.7 191.0 L126.6 191.9 L128.6 192.7 L130.6 193.6 L132.6 194.5 L134.6 195.3 L136.5 196.3 L138.5 197.2 L140.5 198.1 L142.5 199.1 L144.5 200.1 L146.4 201.1 L148.4 202.1 L150.4 203.1 L152.4 204.2 L154.4 205.2 L156.3 206.3 L158.3 207.4 L160.3 208.5 L162.3 209.6 L164.3 210.7 L166.2 211.9 L168.2 213.0 L170.2 214.2 L172.2 215.4 L174.2 216.6 L176.1 217.8 L178.1 219.1 L180.1 220.4 L182.1 221.7 L184.1 223.0 L186.1 224.4 L188.0 225.7 L190.0 227.1 L192.0 228.5 L194.0 229.9 L196.0 231.4 L197.9 232.8 L199.9 234.3 L201.9 235.8 L203.9 237.3 L205.9 238.8 L207.8 240.4 L209.8 241.9 L211.8 243.5 L213.8 245.0 L215.8 246.6 L217.7 248.3 L219.7 249.9 L221.7 251.6 L223.7 253.4 L225.7 255.1 L227.6 256.9 L229.6 258.7 L231.6 260.5 L233.6 262.3 L235.6 264.2 L237.5 266.1 L239.5 267.9 L241.5 269.8 L243.5 271.7 L245.5 273.6 L247.4 275.5 L249.4 277.4 L251.4 279.3 L253.4 281.3 L255.4 283.2 L257.3 285.1 L259.3 287.1 L261.3 289.1 L263.3 291.1 L265.3 293.1 L267.3 295.1 L269.2 297.2 L271.2 299.2 L273.2 301.3 L275.2 303.3 L277.2 305.4 L279.1 307.5 L279.1 307.5 L281.0 307.6 L282.8 307.7 L284.7 307.8 L286.5 307.8 L288.3 307.8 L290.2 307.9 L292.0 307.9 L293.9 307.9 L295.7 307.9 L297.6 307.8 L299.4 307.6 L301.2 307.4 L303.1 307.1 L304.9 306.9 L306.8 306.9 L308.6 306.9 L310.5 307.0 L312.3 307.1 L314.1 307.2 L316.0 307.4 L317.8 307.6 L319.7 307.8 L321.5 308.0 L323.4 308.3 L325.2 308.5 L327.0 308.8 L328.9 309.1 L330.7 309.4 L332.6 309.7 L334.4 310.1 L336.2 310.4 L338.1 310.7 L339.9 311.0 L341.8 311.3 L343.6 311.7 L345.5 312.1 L347.3 312.5 L349.1 312.9 L351.0 313.4 L352.8 313.9 L354.7 314.4 L356.5 314.9 L358.4 315.4 L360.2 315.9 L362.0 316.5 L363.9 317.1 L365.7 317.7 L367.6 318.3 L369.4 318.9 L371.3 319.5 L373.1 320.1 L374.9 320.8 L376.8 321.4 L378.6 322.1 L380.5 322.7 L382.3 323.4 L384.1 324.2 L386.0 324.9 L387.8 325.7 L389.7 326.5 L391.5 327.3 L393.4 328.1 L395.2 329.0 L397.0 329.8 L398.9 330.7 L400.7 331.6 L402.6 332.5 L404.4 333.5 L406.3 334.4 L408.1 335.4 L409.9 336.3 L411.8 337.3 L413.6 338.3 L415.5 339.3 L417.3 340.3 L419.2 341.3 L421.0 342.3 L422.8 343.4 L424.7 344.4 L426.5 345.5 L428.4 346.6 L430.2 347.7 L432.1 348.8 L433.9 350.0 L435.7 351.2 L437.6 352.4 L439.4 353.6 L441.3 354.8 L443.1 356.0 L444.9 357.3 L446.8 358.5 L448.6 359.8 L450.5 361.1 L452.3 362.4 L454.2 363.7 L456.0 365.0 L457.8 366.3 L459.7 367.6 L461.5 368.9 L463.4 370.2 L465.2 371.5 L467.1 372.8 L468.9 374.1 L470.7 375.5 L472.6 376.8 L474.4 378.2 L476.3 379.6 L478.1 380.9 L480.0 382.3 L481.8 383.7 L483.6 385.2 L485.5 386.6 L487.3 388.0 L489.2 389.5 L491.0 390.9 L492.8 392.4 L494.7 393.8 L496.5 395.3 L498.4 396.8 L498.4 396.8 L502.3 396.0 L506.3 395.0 L510.3 393.8 L514.2 392.5 L518.2 391.0 L522.1 389.5 L526.1 387.9 L530.1 386.2 L534.0 384.6 L538.0 383.1 L541.9 381.6 L545.9 380.3 L549.9 379.0 L553.8 377.9 L557.8 376.7 L561.8 375.6 L565.7 374.5 L569.7 373.5 L573.6 372.5 L577.6 371.5 L581.6 370.5 L585.5 369.6 L589.5 368.7 L593.4 367.8 L597.4 367.0 L601.4 366.1 L605.3 365.3 L609.3 364.6 L613.2 363.8 L617.2 363.1 L621.2 362.4 L625.1 361.7 L629.1 361.1 L633.1 360.5 L637.0 359.9 L641.0 359.3 L644.9 358.8 L648.9 358.2 L652.9 357.7 L656.8 357.2 L660.8 356.7 L664.7 356.2 L668.7 355.8 L672.7 355.4 L676.6 354.9 L680.6 354.5 L684.5 354.1 L688.5 353.8 L692.5 353.4 L696.4 353.0 L700.4 352.7 L704.4 352.4 L708.3 352.0 L712.3 351.7 L716.2 351.4 L720.2 351.2 L724.2 350.9 L728.1 350.6 L732.1 350.4 L736.0 350.1 L740.0 349.9 L744.0 349.6 L747.9 349.4 L751.9 349.2 L755.8 349.0 L759.8 348.8 L763.8 348.6 L767.7 348.4 L771.7 348.3 L775.6 348.1 L779.6 347.9 L783.6 347.8 L787.5 347.6 L791.5 347.5 L795.5 347.4 L799.4 347.2 L803.4 347.1 L807.3 347.0 L811.3 346.9 L815.3 346.8 L819.2 346.7 L823.2 346.6 L827.1 346.5 L831.1 346.4 L835.1 346.3 L839.0 346.3 L843.0 346.2 L846.9 346.1 L850.9 346.0 L854.9 346.0 L858.8 345.9 L862.8 345.8 L866.8 345.8 L870.7 345.7 L874.7 345.6 L878.6 345.6 L882.6 345.5 L886.6 345.5 L890.5 345.4 L894.5 345.4 L898.4 345.3 L902.4 345.3 L906.4 345.2 L910.3 345.2 L914.3 345.1 L918.2 345.1 L922.2 345.1 L926.2 345.0 L930.1 345.0 L934.1 345.0 L938.1 345.0 L942.0 344.9 L946.0 344.9 L949.9 344.9 L953.9 344.9 L957.9 344.9 L961.8 344.8 L965.8 344.8 L969.7 344.8" stroke="url(#gexp)" stroke-width="2.2" stroke-dasharray="2 2.1" opacity=".95"/>
<path d="M41.8 172.3 L44.1 172.7 L46.5 173.3 L48.8 173.8 L51.1 174.4 L53.4 174.9 L55.8 175.5 L58.1 176.1 L60.4 176.7 L62.7 177.4 L65.1 178.0 L67.4 178.7 L69.7 179.3 L72.0 180.0 L74.4 180.7 L76.7 181.4 L79.0 182.1 L81.3 182.9 L83.7 183.6 L86.0 184.4 L88.3 185.1 L90.6 185.9 L93.0 186.7 L95.3 187.6 L97.6 188.4 L99.9 189.3 L102.3 190.2 L104.6 191.1 L106.9 192.0 L109.3 192.9 L111.6 193.9 L113.9 194.9 L116.2 195.9 L118.6 196.8 L120.9 197.9 L123.2 198.9 L125.5 199.9 L127.9 201.0 L130.2 202.0 L132.5 203.1 L134.8 204.2 L137.2 205.4 L139.5 206.5 L141.8 207.7 L144.1 208.9 L146.5 210.0 L148.8 211.3 L151.1 212.5 L153.4 213.7 L155.8 215.0 L158.1 216.2 L160.4 217.5 L162.7 218.7 L165.1 220.0 L167.4 221.3 L169.7 222.6 L172.0 223.8 L174.4 225.2 L176.7 226.5 L179.0 227.8 L181.3 229.2 L183.7 230.6 L186.0 232.0 L188.3 233.4 L190.6 234.8 L193.0 236.2 L195.3 237.6 L197.6 239.0 L200.0 240.4 L202.3 241.8 L204.6 243.2 L206.9 244.6 L209.3 246.0 L211.6 247.4 L213.9 248.8 L216.2 250.2 L218.6 251.5 L220.9 252.9 L223.2 254.3 L225.5 255.7 L227.9 257.1 L230.2 258.5 L232.5 259.9 L234.8 261.3 L237.2 262.7 L239.5 264.0 L241.8 265.4 L244.1 266.7 L246.5 268.1 L248.8 269.4 L251.1 270.7 L253.4 272.0 L255.8 273.2 L258.1 274.5 L260.4 275.8 L262.7 277.0 L265.1 278.3 L267.4 279.5 L269.7 280.7 L272.0 282.0 L274.4 283.2 L276.7 284.4 L279.0 285.6 L281.3 286.8 L283.7 287.9 L286.0 289.1 L288.3 290.3 L290.7 291.4 L293.0 292.6 L295.3 293.7 L297.6 294.8 L300.0 295.9 L302.3 297.0 L304.6 298.1 L306.9 299.2 L309.3 300.3 L311.6 301.3 L313.9 302.4 L316.2 303.4 L318.6 304.5 L320.9 305.5 L323.2 306.5 L325.5 307.6 L327.9 308.6 L330.2 309.6 L332.5 310.7 L334.8 311.7 L337.2 312.7 L339.5 313.8 L341.8 314.8 L344.1 315.9 L346.5 316.9 L348.8 318.0 L351.1 319.0 L353.4 320.0 L355.8 321.1 L358.1 322.1 L360.4 323.1 L362.7 324.2 L365.1 325.2 L367.4 326.3 L369.7 327.3 L372.0 328.4 L374.4 329.4 L376.7 330.5 L379.0 331.6 L381.4 332.6 L383.7 333.7 L386.0 334.8 L388.3 335.9 L390.7 337.1 L393.0 338.2 L395.3 339.3 L397.6 340.4 L400.0 341.6 L402.3 342.7 L404.6 343.8 L406.9 344.9 L409.3 346.0 L411.6 347.1 L413.9 348.2 L416.2 349.3 L418.6 350.3 L420.9 351.4 L423.2 352.4 L425.5 353.4 L427.9 354.5 L430.2 355.6 L432.5 356.6 L434.8 357.7 L437.2 358.8 L439.5 359.8 L441.8 360.9 L444.1 361.9 L446.5 362.9 L448.8 363.9 L451.1 364.9 L453.4 365.8 L455.8 366.7 L458.1 367.6 L460.4 368.4 L462.7 369.1 L465.1 369.9 L467.4 370.6 L469.7 371.3 L472.1 372.0 L474.4 372.7 L476.7 373.5 L479.0 374.2 L481.4 374.9 L483.7 375.6 L486.0 376.2 L488.3 376.8 L490.7 377.3 L493.0 377.8 L495.3 378.2 L497.6 378.5 L500.0 378.7 L502.3 378.8 L504.6 378.8 L506.9 378.8 L509.3 378.8 L511.6 378.8 L513.9 378.8 L516.2 378.8 L518.6 378.8 L520.9 378.8 L523.2 378.8 L525.5 378.8 L527.9 378.8 L530.2 378.8 L532.5 378.8 L534.8 378.8 L537.2 378.8 L539.5 378.8 L541.8 378.7 L544.1 378.7 L546.5 378.7 L548.8 378.7 L551.1 378.6 L553.5 378.5 L555.8 378.3 L558.1 378.0 L560.4 377.7 L562.8 377.4 L565.1 377.0 L567.4 376.6 L569.7 376.2 L572.1 375.7 L574.4 375.3 L576.7 374.8 L579.0 374.3 L581.4 373.9 L583.7 373.4 L586.0 373.0 L588.3 372.5 L590.7 372.1 L593.0 371.7 L595.3 371.3 L597.6 370.9 L600.0 370.5 L602.3 370.1 L604.6 369.7 L606.9 369.2 L609.3 368.8 L611.6 368.4 L613.9 367.9 L616.2 367.5 L618.6 367.1 L620.9 366.6 L623.2 366.2 L625.5 365.8 L627.9 365.4 L630.2 365.0 L632.5 364.7 L634.8 364.3 L637.2 363.9 L639.5 363.5 L641.8 363.2 L644.2 362.8 L646.5 362.4 L648.8 362.1 L651.1 361.7 L653.5 361.4 L655.8 361.0 L658.1 360.7 L660.4 360.4 L662.8 360.0 L665.1 359.7 L667.4 359.4 L669.7 359.1 L672.1 358.8 L674.4 358.5 L676.7 358.2 L679.0 357.9 L681.4 357.7 L683.7 357.4 L686.0 357.1 L688.3 356.8 L690.7 356.6 L693.0 356.3 L695.3 356.1 L697.6 355.8 L700.0 355.6 L702.3 355.3 L704.6 355.1 L706.9 354.9 L709.3 354.7 L711.6 354.4 L713.9 354.2 L716.2 354.0 L718.6 353.8 L720.9 353.6 L723.2 353.4 L725.5 353.2 L727.9 353.0 L730.2 352.8 L732.5 352.6 L734.9 352.5 L737.2 352.3 L739.5 352.1 L741.8 351.9 L744.2 351.8 L746.5 351.6 L748.8 351.5 L751.1 351.3 L753.5 351.1 L755.8 351.0 L758.1 350.9 L760.4 350.7 L762.8 350.6 L765.1 350.4 L767.4 350.3 L769.7 350.2 L772.1 350.0 L774.4 349.9 L776.7 349.8 L779.0 349.6 L781.4 349.5 L783.7 349.4 L786.0 349.3 L788.3 349.2 L790.7 349.1 L793.0 348.9 L795.3 348.8 L797.6 348.7 L800.0 348.6 L802.3 348.5 L804.6 348.5 L806.9 348.4 L809.3 348.3 L811.6 348.2 L813.9 348.1 L816.2 348.0 L818.6 347.9 L820.9 347.9 L823.2 347.8 L825.6 347.7 L827.9 347.6 L830.2 347.6 L832.5 347.5 L834.9 347.4 L837.2 347.3 L839.5 347.3 L841.8 347.2 L844.2 347.1 L846.5 347.1 L848.8 347.0 L851.1 347.0 L853.5 346.9 L855.8 346.8 L858.1 346.8 L860.4 346.7 L862.8 346.7 L865.1 346.6 L867.4 346.5 L869.7 346.5 L872.1 346.4 L874.4 346.4 L876.7 346.3 L879.0 346.3 L881.4 346.2 L883.7 346.2 L886.0 346.2 L888.3 346.1 L890.7 346.1 L893.0 346.0 L895.3 346.0 L897.6 345.9 L900.0 345.9 L902.3 345.9 L904.6 345.8 L906.9 345.8 L909.3 345.8 L911.6 345.7 L913.9 345.7 L916.3 345.7 L918.6 345.6 L920.9 345.6 L923.2 345.6 L925.6 345.5 L927.9 345.5 L930.2 345.5 L932.5 345.4 L934.9 345.4 L937.2 345.4 L939.5 345.4 L941.8 345.3 L944.2 345.3 L946.5 345.3 L948.8 345.3 L951.1 345.3 L953.5 345.2 L955.8 345.2 L958.1 345.2 L960.4 345.2 L962.8 345.2 L965.1 345.1 L967.4 345.1 L969.7 345.1" stroke="url(#g32)" stroke-width="2.2" stroke-dasharray="6.4 2.2" opacity=".9"/>
<path d="M41.8 186.4 L44.1 187.0 L46.5 187.7 L48.8 188.3 L51.1 189.0 L53.4 189.6 L55.8 190.3 L58.1 191.0 L60.4 191.6 L62.7 192.3 L65.1 193.0 L67.4 193.7 L69.7 194.5 L72.0 195.2 L74.4 195.9 L76.7 196.7 L79.0 197.4 L81.3 198.2 L83.7 199.0 L86.0 199.7 L88.3 200.5 L90.6 201.3 L93.0 202.1 L95.3 202.9 L97.6 203.8 L99.9 204.6 L102.3 205.4 L104.6 206.3 L106.9 207.1 L109.3 208.0 L111.6 208.8 L113.9 209.7 L116.2 210.6 L118.6 211.5 L120.9 212.4 L123.2 213.3 L125.5 214.2 L127.9 215.1 L130.2 216.0 L132.5 216.9 L134.8 217.9 L137.2 218.8 L139.5 219.8 L141.8 220.7 L144.1 221.7 L146.5 222.6 L148.8 223.6 L151.1 224.6 L153.4 225.6 L155.8 226.6 L158.1 227.6 L160.4 228.6 L162.7 229.6 L165.1 230.6 L167.4 231.6 L169.7 232.7 L172.0 233.7 L174.4 234.7 L176.7 235.8 L179.0 236.8 L181.3 237.9 L183.7 239.0 L186.0 240.0 L188.3 241.1 L190.6 242.2 L193.0 243.3 L195.3 244.3 L197.6 245.4 L200.0 246.5 L202.3 247.6 L204.6 248.7 L206.9 249.8 L209.3 251.0 L211.6 252.1 L213.9 253.2 L216.2 254.3 L218.6 255.4 L220.9 256.6 L223.2 257.7 L225.5 258.8 L227.9 260.0 L230.2 261.1 L232.5 262.3 L234.8 263.4 L237.2 264.6 L239.5 265.7 L241.8 266.9 L244.1 268.1 L246.5 269.2 L248.8 270.4 L251.1 271.6 L253.4 272.7 L255.8 273.9 L258.1 275.1 L260.4 276.2 L262.7 277.4 L265.1 278.6 L267.4 279.8 L269.7 280.9 L272.0 282.1 L274.4 283.3 L276.7 284.5 L279.0 285.7 L281.3 286.8 L283.7 288.0 L286.0 289.2 L288.3 290.4 L290.7 291.6 L293.0 292.7 L295.3 293.9 L297.6 295.1 L300.0 296.3 L302.3 297.4 L304.6 298.6 L306.9 299.8 L309.3 301.0 L311.6 302.1 L313.9 303.3 L316.2 304.5 L318.6 305.6 L320.9 306.8 L323.2 307.9 L325.5 309.1 L327.9 310.2 L330.2 311.4 L332.5 312.5 L334.8 313.7 L337.2 314.8 L339.5 315.9 L341.8 317.0 L344.1 318.2 L346.5 319.3 L348.8 320.4 L351.1 321.5 L353.4 322.6 L355.8 323.6 L358.1 324.7 L360.4 325.8 L362.7 326.8 L365.1 327.9 L367.4 329.0 L369.7 330.0 L372.0 331.0 L374.4 332.1 L376.7 333.1 L379.0 334.1 L381.4 335.1 L383.7 336.1 L386.0 337.1 L388.3 338.0 L390.7 339.0 L393.0 339.9 L395.3 340.9 L397.6 341.8 L400.0 342.7 L402.3 343.7 L404.6 344.6 L406.9 345.4 L409.3 346.3 L411.6 347.2 L413.9 348.0 L416.2 348.9 L418.6 349.7 L420.9 350.5 L423.2 351.3 L425.5 352.1 L427.9 352.9 L430.2 353.6 L432.5 354.4 L434.8 355.1 L437.2 355.8 L439.5 356.5 L441.8 357.2 L444.1 357.9 L446.5 358.5 L448.8 359.2 L451.1 359.8 L453.4 360.4 L455.8 361.0 L458.1 361.6 L460.4 362.2 L462.7 362.8 L465.1 363.3 L467.4 363.8 L469.7 364.3 L472.1 364.8 L474.4 365.3 L476.7 365.8 L479.0 366.3 L481.4 366.7 L483.7 367.1 L486.0 367.6 L488.3 368.0 L490.7 368.4 L493.0 368.7 L495.3 369.1 L497.6 369.4 L500.0 369.8 L502.3 370.1 L504.6 370.4 L506.9 370.7 L509.3 370.9 L511.6 371.2 L513.9 371.4 L516.2 371.6 L518.6 371.9 L520.9 372.1 L523.2 372.3 L525.5 372.4 L527.9 372.6 L530.2 372.7 L532.5 372.9 L534.8 373.0 L537.2 373.1 L539.5 373.2 L541.8 373.3 L544.1 373.4 L546.5 373.4 L548.8 373.5 L551.1 373.5 L553.5 373.6 L555.8 373.6 L558.1 373.6 L560.4 373.6 L562.8 373.6 L565.1 373.5 L567.4 373.5 L569.7 373.5 L572.1 373.4 L574.4 373.4 L576.7 373.3 L579.0 373.2 L581.4 373.1 L583.7 373.0 L586.0 372.9 L588.3 372.8 L590.7 372.7 L593.0 372.6 L595.3 372.5 L597.6 372.3 L600.0 372.2 L602.3 372.1 L604.6 371.9 L606.9 371.7 L609.3 371.6 L611.6 371.4 L613.9 371.2 L616.2 371.1 L618.6 370.9 L620.9 370.7 L623.2 370.5 L625.5 370.3 L627.9 370.1 L630.2 369.9 L632.5 369.7 L634.8 369.5 L637.2 369.3 L639.5 369.1 L641.8 368.8 L644.2 368.6 L646.5 368.4 L648.8 368.2 L651.1 367.9 L653.5 367.7 L655.8 367.5 L658.1 367.3 L660.4 367.0 L662.8 366.8 L665.1 366.6 L667.4 366.3 L669.7 366.1 L672.1 365.8 L674.4 365.6 L676.7 365.4 L679.0 365.1 L681.4 364.9 L683.7 364.6 L686.0 364.4 L688.3 364.1 L690.7 363.9 L693.0 363.7 L695.3 363.4 L697.6 363.2 L700.0 362.9 L702.3 362.7 L704.6 362.4 L706.9 362.2 L709.3 362.0 L711.6 361.7 L713.9 361.5 L716.2 361.3 L718.6 361.0 L720.9 360.8 L723.2 360.6 L725.5 360.3 L727.9 360.1 L730.2 359.9 L732.5 359.7 L734.9 359.4 L737.2 359.2 L739.5 359.0 L741.8 358.8 L744.2 358.6 L746.5 358.4 L748.8 358.1 L751.1 357.9 L753.5 357.7 L755.8 357.5 L758.1 357.3 L760.4 357.1 L762.8 356.9 L765.1 356.7 L767.4 356.5 L769.7 356.3 L772.1 356.1 L774.4 356.0 L776.7 355.8 L779.0 355.6 L781.4 355.4 L783.7 355.2 L786.0 355.0 L788.3 354.9 L790.7 354.7 L793.0 354.5 L795.3 354.4 L797.6 354.2 L800.0 354.0 L802.3 353.9 L804.6 353.7 L806.9 353.5 L809.3 353.4 L811.6 353.2 L813.9 353.1 L816.2 352.9 L818.6 352.8 L820.9 352.6 L823.2 352.5 L825.6 352.4 L827.9 352.2 L830.2 352.1 L832.5 352.0 L834.9 351.8 L837.2 351.7 L839.5 351.6 L841.8 351.4 L844.2 351.3 L846.5 351.2 L848.8 351.1 L851.1 351.0 L853.5 350.8 L855.8 350.7 L858.1 350.6 L860.4 350.5 L862.8 350.4 L865.1 350.3 L867.4 350.2 L869.7 350.1 L872.1 350.0 L874.4 349.9 L876.7 349.8 L879.0 349.7 L881.4 349.6 L883.7 349.5 L886.0 349.4 L888.3 349.3 L890.7 349.2 L893.0 349.1 L895.3 349.0 L897.6 349.0 L900.0 348.9 L902.3 348.8 L904.6 348.7 L906.9 348.6 L909.3 348.5 L911.6 348.5 L913.9 348.4 L916.3 348.3 L918.6 348.2 L920.9 348.2 L923.2 348.1 L925.6 348.0 L927.9 347.9 L930.2 347.9 L932.5 347.8 L934.9 347.7 L937.2 347.7 L939.5 347.6 L941.8 347.5 L944.2 347.5 L946.5 347.4 L948.8 347.4 L951.1 347.3 L953.5 347.2 L955.8 347.2 L958.1 347.1 L960.4 347.1 L962.8 347.0 L965.1 347.0 L967.4 346.9 L969.7 346.9" stroke="url(#gnow)" stroke-width="2.35"/>
</g>
<rect x="503" y="157.5" width="1.3" height="262.7" fill="#2f9ae0"/>
<path d="M504.8 144V420" stroke="#fff" stroke-width="1" stroke-dasharray="1.6 1.4"/>
<rect x="626.2" y="157.5" width="1.1" height="262.7" fill="#2f9ae0"/>
<text x="502.4" y="155" font-size="9.7" text-anchor="end" fill="#2c94dc" letter-spacing="0.2">$335.96</text>
<text x="627.8" y="155" font-size="9.7" fill="#2c94dc" letter-spacing="0.2">$358.47</text>
<rect x="41.8" y="143.6" width="1" height="277.1" fill="#d8d8e0"/>
<rect x="41.8" y="419.6" width="925.2" height="1.2" fill="#d8d8e0"/>
<rect x="48.2" y="148.5" width="22" height="2.8" rx="1.2" fill="#fff"/>
<text x="75.4" y="153.4" font-size="9.4" fill="#f0f0f4" letter-spacing="0.36">Fri May 19th (now)</text>
<path d="M48.2 163.9H70.2" stroke="#dcdce4" stroke-width="1.8" stroke-dasharray="5.1 1.8 7.4 1.8 5.9 0"/>
<text x="75.4" y="166.9" font-size="9.4" fill="#f0f0f4" letter-spacing="0.36">Tue Jun 20th (32d)</text>
<path d="M48.4 177.7H70.4" stroke="#9a9aaa" stroke-width="1.4" stroke-dasharray="1.7 2.45"/>
<text x="75.4" y="179.9" font-size="9.4" fill="#f0f0f4" letter-spacing="0.36">Expiration (43d)</text>
<linearGradient id="pbi" x1="0" y1="0" x2="0" y2="1"><stop offset="0" stop-color="#1c6a96"/><stop offset="1" stop-color="#1fa69a"/></linearGradient>
<path d="M49.3 195.2C54 195 55.5 192 57 189.8C58 188.3 58.6 187.9 59.2 187.9C59.8 187.9 60.4 188.3 61.4 189.8C62.9 192 64.4 195 69.1 195.2Z" fill="url(#pbi)" stroke="#0a2230" stroke-width=".5"/>
<text x="75.4" y="194.2" font-size="9.4" fill="#f0f0f4" letter-spacing="0.36">Probability</text>
<text x="7" y="453" font-size="11" fill="#f0f0f4" letter-spacing="0.08">DATE: <tspan font-weight="bold">Now</tspan></text>
<text x="966.6" y="453" font-size="11" text-anchor="end" fill="#f0f0f4" letter-spacing="0.45">(43d remaining)</text>
<rect x="5" y="460.3" width="973" height="1" fill="#1a1a44"/>
<rect x="5" y="461.2" width="973" height="2.8" fill="#0b0b0f"/>
<rect x="5" y="464" width="973" height="2.2" fill="#1f1f21"/>
<linearGradient id="sl" x1="0" y1="0" x2="0" y2="1"><stop offset="0" stop-color="#08080e"/><stop offset="1" stop-color="#050520"/></linearGradient>
<rect x="5" y="466.2" width="973" height="4" fill="url(#sl)"/>
<rect x="7.9" y="457.3" width="7.4" height="3.8" rx="1.3" fill="#9a9aa2"/>
</svg>
<div style="position:absolute;left:61.5px;top:468.6px;width:915.3px;height:14.2px;background:linear-gradient(#34344a,#44445b);"></div>
<div style="position:absolute;left:61.5px;top:482.7px;width:915.3px;height:13.2px;background:#30304d;"></div>
<div style="position:absolute;left:61.5px;top:468.6px;width:261.5px;height:14.2px;background:linear-gradient(#2f2f44,#3e3e54);"></div>
<div style="position:absolute;left:323.0px;top:468.6px;width:653.8px;height:14.2px;background:linear-gradient(#38384d,#4b4b61);"></div>
<div style="position:absolute;left:322.6px;top:468.6px;width:2px;height:14.2px;background:#0a0a1c;"></div>
<div style="position:absolute;top:468.6px;font-size:10.5px;color:#9e9eb4;letter-spacing:.3px;text-align:center;width:60px;left:162.3px;">May</div>
<div style="position:absolute;top:468.6px;font-size:10.5px;color:#9e9eb4;letter-spacing:.3px;text-align:center;width:60px;left:621.7px;">Jun</div>
<div class="dh" style="left:61.5px;top:483.7px;width:43.6px;">19</div>
<div class="dh" style="left:105.1px;top:483.7px;width:43.6px;">22</div>
<div class="dh" style="left:148.7px;top:483.7px;width:43.6px;">23</div>
<div class="dh" style="left:192.3px;top:483.7px;width:43.6px;">26</div>
<div class="dh" style="left:235.8px;top:483.7px;width:43.6px;">29</div>
<div class="dh" style="left:279.4px;top:483.7px;width:43.6px;">30</div>
<div class="dh" style="left:323.0px;top:483.7px;width:43.6px;">1</div>
<div class="dh" style="left:366.6px;top:483.7px;width:43.6px;">2</div>
<div class="dh" style="left:410.2px;top:483.7px;width:43.6px;">6</div>
<div class="dh" style="left:453.8px;top:483.7px;width:43.6px;">8</div>
<div class="dh" style="left:497.4px;top:483.7px;width:43.6px;">9</div>
<div class="dh" style="left:540.9px;top:483.7px;width:43.6px;">12</div>
<div class="dh" style="left:584.5px;top:483.7px;width:43.6px;">15</div>
<div class="dh" style="left:628.1px;top:483.7px;width:43.6px;">16</div>
<div class="dh" style="left:671.7px;top:483.7px;width:43.6px;">19</div>
<div class="dh" style="left:715.3px;top:483.7px;width:43.6px;"><span style="display:inline-block;width:14px"></span>20</div>
<div class="dh" style="left:758.9px;top:483.7px;width:43.6px;">21</div>
<div class="dh" style="left:802.5px;top:483.7px;width:43.6px;">23</div>
<div class="dh" style="left:846.0px;top:483.7px;width:43.6px;">26</div>
<div class="dh" style="left:889.6px;top:483.7px;width:43.6px;">28</div>
<div class="dh" style="left:933.2px;top:483.7px;width:43.6px;">30</div>
<div class="rl" style="top:495.80px;height:13.62px;"><b style="top:1.5px">$421</b><i style="top:1.1px">25%</i></div>
<div class="c" style="left:61.50px;top:495.80px;width:43.64px;height:13.62px;line-height:15.87px;background:rgb(5,139,41)">329</div>
<div class="c" style="left:105.09px;top:495.80px;width:43.64px;height:13.62px;line-height:15.87px;background:rgb(5,140,41)">332</div>
<div class="c" style="left:148.67px;top:495.80px;width:43.64px;height:13.62px;line-height:15.87px;background:rgb(5,141,41)">333</div>
<div class="c" style="left:192.26px;top:495.80px;width:43.64px;height:13.62px;line-height:15.87px;background:rgb(5,142,41)">336</div>
<div class="c" style="left:235.84px;top:495.80px;width:43.64px;height:13.62px;line-height:15.87px;background:rgb(5,143,41)">339</div>
<div class="c" style="left:279.43px;top:495.80px;width:43.64px;height:13.62px;line-height:15.87px;background:rgb(5,143,41)">339</div>
<div class="c" style="left:323.01px;top:495.80px;width:43.64px;height:13.62px;line-height:15.87px;background:rgb(5,144,41)">341</div>
<div class="c" style="left:366.60px;top:495.80px;width:43.64px;height:13.62px;line-height:15.87px;background:rgb(5,144,41)">342</div>
<div class="c" style="left:410.19px;top:495.80px;width:43.64px;height:13.62px;line-height:15.87px;background:rgb(4,145,41)">345</div>
<div class="c" style="left:453.77px;top:495.80px;width:43.64px;height:13.62px;line-height:15.87px;background:rgb(4,146,41)">347</div>
<div class="c" style="left:497.36px;top:495.80px;width:43.64px;height:13.62px;line-height:15.87px;background:rgb(4,146,41)">347</div>
<div class="c" style="left:540.94px;top:495.80px;width:43.64px;height:13.62px;line-height:15.87px;background:rgb(4,147,41)">349</div>
<div class="c" style="left:584.53px;top:495.80px;width:43.64px;height:13.62px;line-height:15.87px;background:rgb(4,148,41)">351</div>
<div class="c" style="left:628.11px;top:495.80px;width:43.64px;height:13.62px;line-height:15.87px;background:rgb(4,148,41)">352</div>
<div class="c" style="left:671.70px;top:495.80px;width:43.64px;height:13.62px;line-height:15.87px;background:rgb(4,148,41)">353</div>
<div class="c" style="left:715.29px;top:495.80px;width:43.64px;height:13.62px;line-height:15.87px;background:rgb(4,149,41)">354</div>
<div class="c" style="left:758.87px;top:495.80px;width:43.64px;height:13.62px;line-height:15.87px;background:rgb(4,149,41)">355</div>
<div class="c" style="left:802.46px;top:495.80px;width:43.64px;height:13.62px;line-height:15.87px;background:rgb(4,149,41)">355</div>
<div class="c" style="left:846.04px;top:495.80px;width:43.64px;height:13.62px;line-height:15.87px;background:rgb(4,150,41)">357</div>
<div class="c" style="left:889.63px;top:495.80px;width:43.64px;height:13.62px;line-height:15.87px;background:rgb(4,150,41)">358</div>
<div class="c" style="left:933.21px;top:495.80px;width:43.64px;height:13.62px;line-height:15.87px;background:rgb(4,150,41)">358</div>
<div class="rl" style="top:509.37px;height:13.62px;"><b style="top:1.5px">$413</b><i style="top:1.1px">23%</i></div>
<div class="c" style="left:61.50px;top:509.37px;width:43.64px;height:13.62px;line-height:15.87px;background:rgb(5,133,41)">313</div>
<div class="c" style="left:105.09px;top:509.37px;width:43.64px;height:13.62px;line-height:15.87px;background:rgb(5,134,41)">317</div>
<div class="c" style="left:148.67px;top:509.37px;width:43.64px;height:13.62px;line-height:15.87px;background:rgb(5,135,41)">319</div>
<div class="c" style="left:192.26px;top:509.37px;width:43.64px;height:13.62px;line-height:15.87px;background:rgb(5,136,41)">322</div>
<div class="c" style="left:235.84px;top:509.37px;width:43.64px;height:13.62px;line-height:15.87px;background:rgb(5,138,41)">326</div>
<div class="c" style="left:279.43px;top:509.37px;width:43.64px;height:13.62px;line-height:15.87px;background:rgb(5,138,41)">327</div>
<div class="c" style="left:323.01px;top:509.37px;width:43.64px;height:13.62px;line-height:15.87px;background:rgb(5,139,41)">330</div>
<div class="c" style="left:366.60px;top:509.37px;width:43.64px;height:13.62px;line-height:15.87px;background:rgb(5,140,41)">331</div>
<div class="c" style="left:410.19px;top:509.37px;width:43.64px;height:13.62px;line-height:15.87px;background:rgb(5,141,41)">335</div>
<div class="c" style="left:453.77px;top:509.37px;width:43.64px;height:13.62px;line-height:15.87px;background:rgb(5,142,41)">337</div>
<div class="c" style="left:497.36px;top:509.37px;width:43.64px;height:13.62px;line-height:15.87px;background:rgb(5,143,41)">338</div>
<div class="c" style="left:540.94px;top:509.37px;width:43.64px;height:13.62px;line-height:15.87px;background:rgb(5,144,41)">341</div>
<div class="c" style="left:584.53px;top:509.37px;width:43.64px;height:13.62px;line-height:15.87px;background:rgb(4,145,41)">344</div>
<div class="c" style="left:628.11px;top:509.37px;width:43.64px;height:13.62px;line-height:15.87px;background:rgb(4,145,41)">345</div>
<div class="c" style="left:671.70px;top:509.37px;width:43.64px;height:13.62px;line-height:15.87px;background:rgb(4,146,41)">347</div>
<div class="c" style="left:715.29px;top:509.37px;width:43.64px;height:13.62px;line-height:15.87px;background:rgb(4,146,41)">348</div>
<div class="c" style="left:758.87px;top:509.37px;width:43.64px;height:13.62px;line-height:15.87px;background:rgb(4,147,41)">349</div>
<div class="c" style="left:802.46px;top:509.37px;width:43.64px;height:13.62px;line-height:15.87px;background:rgb(4,147,41)">350</div>
<div class="c" style="left:846.04px;top:509.37px;width:43.64px;height:13.62px;line-height:15.87px;background:rgb(4,148,41)">352</div>
<div class="c" style="left:889.63px;top:509.37px;width:43.64px;height:13.62px;line-height:15.87px;background:rgb(4,148,41)">353</div>
<div class="c" style="left:933.21px;top:509.37px;width:43.64px;height:13.62px;line-height:15.87px;background:rgb(4,149,41)">355</div>
<div class="rl" style="top:522.93px;height:13.62px;"><b style="top:1.5px">$405</b><i style="top:1.1px">20%</i></div>
<div class="c" style="left:61.50px;top:522.93px;width:43.64px;height:13.62px;line-height:15.87px;background:rgb(5,124,41)">291</div>
<div class="c" style="left:105.09px;top:522.93px;width:43.64px;height:13.62px;line-height:15.87px;background:rgb(5,126,41)">297</div>
<div class="c" style="left:148.67px;top:522.93px;width:43.64px;height:13.62px;line-height:15.87px;background:rgb(5,127,41)">298</div>
<div class="c" style="left:192.26px;top:522.93px;width:43.64px;height:13.62px;line-height:15.87px;background:rgb(5,129,41)">303</div>
<div class="c" style="left:235.84px;top:522.93px;width:43.64px;height:13.62px;line-height:15.87px;background:rgb(5,131,41)">308</div>
<div class="c" style="left:279.43px;top:522.93px;width:43.64px;height:13.62px;line-height:15.87px;background:rgb(5,131,41)">310</div>
<div class="c" style="left:323.01px;top:522.93px;width:43.64px;height:13.62px;line-height:15.87px;background:rgb(5,133,41)">313</div>
<div class="c" style="left:366.60px;top:522.93px;width:43.64px;height:13.62px;line-height:15.87px;background:rgb(5,133,41)">314</div>
<div class="c" style="left:410.19px;top:522.93px;width:43.64px;height:13.62px;line-height:15.87px;background:rgb(5,135,41)">320</div>
<div class="c" style="left:453.77px;top:522.93px;width:43.64px;height:13.62px;line-height:15.87px;background:rgb(5,137,41)">323</div>
<div class="c" style="left:497.36px;top:522.93px;width:43.64px;height:13.62px;line-height:15.87px;background:rgb(5,137,41)">325</div>
<div class="c" style="left:540.94px;top:522.93px;width:43.64px;height:13.62px;line-height:15.87px;background:rgb(5,139,41)">329</div>
<div class="c" style="left:584.53px;top:522.93px;width:43.64px;height:13.62px;line-height:15.87px;background:rgb(5,140,41)">332</div>
<div class="c" style="left:628.11px;top:522.93px;width:43.64px;height:13.62px;line-height:15.87px;background:rgb(5,141,41)">334</div>
<div class="c" style="left:671.70px;top:522.93px;width:43.64px;height:13.62px;line-height:15.87px;background:rgb(5,142,41)">337</div>
<div class="c" style="left:715.29px;top:522.93px;width:43.64px;height:13.62px;line-height:15.87px;background:rgb(5,143,41)">338</div>
<div class="c" style="left:758.87px;top:522.93px;width:43.64px;height:13.62px;line-height:15.87px;background:rgb(5,143,41)">339</div>
<div class="c" style="left:802.46px;top:522.93px;width:43.64px;height:13.62px;line-height:15.87px;background:rgb(5,144,41)">341</div>
<div class="c" style="left:846.04px;top:522.93px;width:43.64px;height:13.62px;line-height:15.87px;background:rgb(4,145,41)">344</div>
<div class="c" style="left:889.63px;top:522.93px;width:43.64px;height:13.62px;line-height:15.87px;background:rgb(4,146,41)">346</div>
<div class="c" style="left:933.21px;top:522.93px;width:43.64px;height:13.62px;line-height:15.87px;background:rgb(4,146,41)">348</div>
<div class="rl" style="top:536.50px;height:13.62px;"><b style="top:1.5px">$398</b><i style="top:1.1px">18%</i></div>
<div class="c" style="left:61.50px;top:536.50px;width:43.64px;height:13.62px;line-height:15.87px;background:rgb(5,114,41)">266</div>
<div class="c" style="left:105.09px;top:536.50px;width:43.64px;height:13.62px;line-height:15.87px;background:rgb(5,116,41)">272</div>
<div class="c" style="left:148.67px;top:536.50px;width:43.64px;height:13.62px;line-height:15.87px;background:rgb(5,117,41)">274</div>
<div class="c" style="left:192.26px;top:536.50px;width:43.64px;height:13.62px;line-height:15.87px;background:rgb(5,119,41)">280</div>
<div class="c" style="left:235.84px;top:536.50px;width:43.64px;height:13.62px;line-height:15.87px;background:rgb(5,122,41)">286</div>
<div class="c" style="left:279.43px;top:536.50px;width:43.64px;height:13.62px;line-height:15.87px;background:rgb(5,123,41)">288</div>
<div class="c" style="left:323.01px;top:536.50px;width:43.64px;height:13.62px;line-height:15.87px;background:rgb(5,124,41)">292</div>
<div class="c" style="left:366.60px;top:536.50px;width:43.64px;height:13.62px;line-height:15.87px;background:rgb(5,125,41)">294</div>
<div class="c" style="left:410.19px;top:536.50px;width:43.64px;height:13.62px;line-height:15.87px;background:rgb(5,128,41)">302</div>
<div class="c" style="left:453.77px;top:536.50px;width:43.64px;height:13.62px;line-height:15.87px;background:rgb(5,129,41)">305</div>
<div class="c" style="left:497.36px;top:536.50px;width:43.64px;height:13.62px;line-height:15.87px;background:rgb(5,130,41)">307</div>
<div class="c" style="left:540.94px;top:536.50px;width:43.64px;height:13.62px;line-height:15.87px;background:rgb(5,133,41)">313</div>
<div class="c" style="left:584.53px;top:536.50px;width:43.64px;height:13.62px;line-height:15.87px;background:rgb(5,135,41)">318</div>
<div class="c" style="left:628.11px;top:536.50px;width:43.64px;height:13.62px;line-height:15.87px;background:rgb(5,135,41)">319</div>
<div class="c" style="left:671.70px;top:536.50px;width:43.64px;height:13.62px;line-height:15.87px;background:rgb(5,137,41)">324</div>
<div class="c" style="left:715.29px;top:536.50px;width:43.64px;height:13.62px;line-height:15.87px;background:rgb(5,137,41)">325</div>
<div class="c" style="left:758.87px;top:536.50px;width:43.64px;height:13.62px;line-height:15.87px;background:rgb(5,138,41)">327</div>
<div class="c" style="left:802.46px;top:536.50px;width:43.64px;height:13.62px;line-height:15.87px;background:rgb(5,139,41)">330</div>
<div class="c" style="left:846.04px;top:536.50px;width:43.64px;height:13.62px;line-height:15.87px;background:rgb(5,141,41)">334</div>
<div class="c" style="left:889.63px;top:536.50px;width:43.64px;height:13.62px;line-height:15.87px;background:rgb(5,142,41)">337</div>
<div class="c" style="left:933.21px;top:536.50px;width:43.64px;height:13.62px;line-height:15.87px;background:rgb(5,143,41)">339</div>
<div class="rl" style="top:550.06px;height:13.62px;"><b style="top:1.5px">$390</b><i style="top:1.1px">16%</i></div>
<div class="c" style="left:61.50px;top:550.06px;width:43.64px;height:13.62px;line-height:15.87px;background:rgb(6,99,41)">228</div>
<div class="c" style="left:105.09px;top:550.06px;width:43.64px;height:13.62px;line-height:15.87px;background:rgb(6,102,41)">235</div>
<div class="c" style="left:148.67px;top:550.06px;width:43.64px;height:13.62px;line-height:15.87px;background:rgb(6,102,41)">237</div>
<div class="c" style="left:192.26px;top:550.06px;width:43.64px;height:13.62px;line-height:15.87px;background:rgb(6,106,41)">245</div>
<div class="c" style="left:235.84px;top:550.06px;width:43.64px;height:13.62px;line-height:15.87px;background:rgb(5,108,41)">252</div>
<div class="c" style="left:279.43px;top:550.06px;width:43.64px;height:13.62px;line-height:15.87px;background:rgb(5,109,41)">254</div>
<div class="c" style="left:323.01px;top:550.06px;width:43.64px;height:13.62px;line-height:15.87px;background:rgb(5,111,41)">259</div>
<div class="c" style="left:366.60px;top:550.06px;width:43.64px;height:13.62px;line-height:15.87px;background:rgb(5,112,41)">262</div>
<div class="c" style="left:410.19px;top:550.06px;width:43.64px;height:13.62px;line-height:15.87px;background:rgb(5,116,41)">272</div>
<div class="c" style="left:453.77px;top:550.06px;width:43.64px;height:13.62px;line-height:15.87px;background:rgb(5,118,41)">277</div>
<div class="c" style="left:497.36px;top:550.06px;width:43.64px;height:13.62px;line-height:15.87px;background:rgb(5,119,41)">279</div>
<div class="c" style="left:540.94px;top:550.06px;width:43.64px;height:13.62px;line-height:15.87px;background:rgb(5,122,41)">286</div>
<div class="c" style="left:584.53px;top:550.06px;width:43.64px;height:13.62px;line-height:15.87px;background:rgb(5,125,41)">293</div>
<div class="c" style="left:628.11px;top:550.06px;width:43.64px;height:13.62px;line-height:15.87px;background:rgb(5,125,41)">295</div>
<div class="c" style="left:671.70px;top:550.06px;width:43.64px;height:13.62px;line-height:15.87px;background:rgb(5,128,41)">302</div>
<div class="c" style="left:715.29px;top:550.06px;width:43.64px;height:13.62px;line-height:15.87px;background:rgb(5,129,41)">304</div>
<div class="c" style="left:758.87px;top:550.06px;width:43.64px;height:13.62px;line-height:15.87px;background:rgb(5,130,41)">306</div>
<div class="c" style="left:802.46px;top:550.06px;width:43.64px;height:13.62px;line-height:15.87px;background:rgb(5,131,41)">310</div>
<div class="c" style="left:846.04px;top:550.06px;width:43.64px;height:13.62px;line-height:15.87px;background:rgb(5,134,41)">316</div>
<div class="c" style="left:889.63px;top:550.06px;width:43.64px;height:13.62px;line-height:15.87px;background:rgb(5,135,41)">320</div>
<div class="c" style="left:933.21px;top:550.06px;width:43.64px;height:13.62px;line-height:15.87px;background:rgb(5,137,41)">324</div>
<div class="rl" style="top:563.63px;height:13.62px;"><b style="top:1.5px">$382</b><i style="top:1.1px">14%</i></div>
<div class="c" style="left:61.50px;top:563.63px;width:43.64px;height:13.62px;line-height:15.87px;background:rgb(6,79,40)">179</div>
<div class="c" style="left:105.09px;top:563.63px;width:43.64px;height:13.62px;line-height:15.87px;background:rgb(6,82,40)">187</div>
<div class="c" style="left:148.67px;top:563.63px;width:43.64px;height:13.62px;line-height:15.87px;background:rgb(6,83,40)">189</div>
<div class="c" style="left:192.26px;top:563.63px;width:43.64px;height:13.62px;line-height:15.87px;background:rgb(6,86,41)">197</div>
<div class="c" style="left:235.84px;top:563.63px;width:43.64px;height:13.62px;line-height:15.87px;background:rgb(6,90,41)">206</div>
<div class="c" style="left:279.43px;top:563.63px;width:43.64px;height:13.62px;line-height:15.87px;background:rgb(6,91,41)">209</div>
<div class="c" style="left:323.01px;top:563.63px;width:43.64px;height:13.62px;line-height:15.87px;background:rgb(6,93,41)">214</div>
<div class="c" style="left:366.60px;top:563.63px;width:43.64px;height:13.62px;line-height:15.87px;background:rgb(6,94,41)">217</div>
<div class="c" style="left:410.19px;top:563.63px;width:43.64px;height:13.62px;line-height:15.87px;background:rgb(6,99,41)">229</div>
<div class="c" style="left:453.77px;top:563.63px;width:43.64px;height:13.62px;line-height:15.87px;background:rgb(6,102,41)">235</div>
<div class="c" style="left:497.36px;top:563.63px;width:43.64px;height:13.62px;line-height:15.87px;background:rgb(6,103,41)">238</div>
<div class="c" style="left:540.94px;top:563.63px;width:43.64px;height:13.62px;line-height:15.87px;background:rgb(5,106,41)">247</div>
<div class="c" style="left:584.53px;top:563.63px;width:43.64px;height:13.62px;line-height:15.87px;background:rgb(5,110,41)">257</div>
<div class="c" style="left:628.11px;top:563.63px;width:43.64px;height:13.62px;line-height:15.87px;background:rgb(5,111,41)">260</div>
<div class="c" style="left:671.70px;top:563.63px;width:43.64px;height:13.62px;line-height:15.87px;background:rgb(5,115,41)">268</div>
<div class="c" style="left:715.29px;top:563.63px;width:43.64px;height:13.62px;line-height:15.87px;background:rgb(5,116,41)">271</div>
<div class="c" style="left:758.87px;top:563.63px;width:43.64px;height:13.62px;line-height:15.87px;background:rgb(5,117,41)">274</div>
<div class="c" style="left:802.46px;top:563.63px;width:43.64px;height:13.62px;line-height:15.87px;background:rgb(5,119,41)">280</div>
<div class="c" style="left:846.04px;top:563.63px;width:43.64px;height:13.62px;line-height:15.87px;background:rgb(5,123,41)">288</div>
<div class="c" style="left:889.63px;top:563.63px;width:43.64px;height:13.62px;line-height:15.87px;background:rgb(5,125,41)">293</div>
<div class="c" style="left:933.21px;top:563.63px;width:43.64px;height:13.62px;line-height:15.87px;background:rgb(5,127,41)">299</div>
<div class="rl" style="top:577.19px;height:13.62px;"><b style="top:1.5px">$375</b><i style="top:1.1px">12%</i></div>
<div class="c" style="left:61.50px;top:577.19px;width:43.64px;height:13.62px;line-height:15.87px;background:rgb(7,59,40)">128</div>
<div class="c" style="left:105.09px;top:577.19px;width:43.64px;height:13.62px;line-height:15.87px;background:rgb(7,62,40)">135</div>
<div class="c" style="left:148.67px;top:577.19px;width:43.64px;height:13.62px;line-height:15.87px;background:rgb(7,63,40)">138</div>
<div class="c" style="left:192.26px;top:577.19px;width:43.64px;height:13.62px;line-height:15.87px;background:rgb(7,66,40)">146</div>
<div class="c" style="left:235.84px;top:577.19px;width:43.64px;height:13.62px;line-height:15.87px;background:rgb(6,70,40)">155</div>
<div class="c" style="left:279.43px;top:577.19px;width:43.64px;height:13.62px;line-height:15.87px;background:rgb(6,71,40)">158</div>
<div class="c" style="left:323.01px;top:577.19px;width:43.64px;height:13.62px;line-height:15.87px;background:rgb(6,73,40)">164</div>
<div class="c" style="left:366.60px;top:577.19px;width:43.64px;height:13.62px;line-height:15.87px;background:rgb(6,74,40)">167</div>
<div class="c" style="left:410.19px;top:577.19px;width:43.64px;height:13.62px;line-height:15.87px;background:rgb(6,80,40)">180</div>
<div class="c" style="left:453.77px;top:577.19px;width:43.64px;height:13.62px;line-height:15.87px;background:rgb(6,82,40)">187</div>
<div class="c" style="left:497.36px;top:577.19px;width:43.64px;height:13.62px;line-height:15.87px;background:rgb(6,84,40)">190</div>
<div class="c" style="left:540.94px;top:577.19px;width:43.64px;height:13.62px;line-height:15.87px;background:rgb(6,88,41)">201</div>
<div class="c" style="left:584.53px;top:577.19px;width:43.64px;height:13.62px;line-height:15.87px;background:rgb(6,92,41)">212</div>
<div class="c" style="left:628.11px;top:577.19px;width:43.64px;height:13.62px;line-height:15.87px;background:rgb(6,94,41)">215</div>
<div class="c" style="left:671.70px;top:577.19px;width:43.64px;height:13.62px;line-height:15.87px;background:rgb(6,98,41)">226</div>
<div class="c" style="left:715.29px;top:577.19px;width:43.64px;height:13.62px;line-height:15.87px;background:rgb(6,100,41)">230</div>
<div class="c" style="left:758.87px;top:577.19px;width:43.64px;height:13.62px;line-height:15.87px;background:rgb(6,101,41)">234</div>
<div class="c" style="left:802.46px;top:577.19px;width:43.64px;height:13.62px;line-height:15.87px;background:rgb(6,104,41)">241</div>
<div class="c" style="left:846.04px;top:577.19px;width:43.64px;height:13.62px;line-height:15.87px;background:rgb(5,108,41)">252</div>
<div class="c" style="left:889.63px;top:577.19px;width:43.64px;height:13.62px;line-height:15.87px;background:rgb(5,111,41)">259</div>
<div class="c" style="left:933.21px;top:577.19px;width:43.64px;height:13.62px;line-height:15.87px;background:rgb(5,114,41)">266</div>
<div class="rl" style="top:590.76px;height:13.62px;"><b style="top:1.5px">$367</b><i style="top:1.1px">9.2%</i></div>
<div class="c" style="left:61.50px;top:590.76px;width:43.64px;height:13.62px;line-height:15.87px;background:rgb(7,33,40)">64</div>
<div class="c" style="left:105.09px;top:590.76px;width:43.64px;height:13.62px;line-height:15.87px;background:rgb(7,36,40)">70</div>
<div class="c" style="left:148.67px;top:590.76px;width:43.64px;height:13.62px;line-height:15.87px;background:rgb(7,37,40)">72</div>
<div class="c" style="left:192.26px;top:590.76px;width:43.64px;height:13.62px;line-height:15.87px;background:rgb(7,39,40)">79</div>
<div class="c" style="left:235.84px;top:590.76px;width:43.64px;height:13.62px;line-height:15.87px;background:rgb(7,42,40)">86</div>
<div class="c" style="left:279.43px;top:590.76px;width:43.64px;height:13.62px;line-height:15.87px;background:rgb(7,43,40)">88</div>
<div class="c" style="left:323.01px;top:590.76px;width:43.64px;height:13.62px;line-height:15.87px;background:rgb(7,45,40)">94</div>
<div class="c" style="left:366.60px;top:590.76px;width:43.64px;height:13.62px;line-height:15.87px;background:rgb(7,46,40)">96</div>
<div class="c" style="left:410.19px;top:590.76px;width:43.64px;height:13.62px;line-height:15.87px;background:rgb(7,51,40)">109</div>
<div class="c" style="left:453.77px;top:590.76px;width:43.64px;height:13.62px;line-height:15.87px;background:rgb(7,54,40)">115</div>
<div class="c" style="left:497.36px;top:590.76px;width:43.64px;height:13.62px;line-height:15.87px;background:rgb(7,55,40)">119</div>
<div class="c" style="left:540.94px;top:590.76px;width:43.64px;height:13.62px;line-height:15.87px;background:rgb(7,60,40)">130</div>
<div class="c" style="left:584.53px;top:590.76px;width:43.64px;height:13.62px;line-height:15.87px;background:rgb(7,65,40)">142</div>
<div class="c" style="left:628.11px;top:590.76px;width:43.64px;height:13.62px;line-height:15.87px;background:rgb(7,66,40)">146</div>
<div class="c" style="left:671.70px;top:590.76px;width:43.64px;height:13.62px;line-height:15.87px;background:rgb(6,71,40)">159</div>
<div class="c" style="left:715.29px;top:590.76px;width:43.64px;height:13.62px;line-height:15.87px;background:rgb(6,73,40)">164</div>
<div class="c" style="left:758.87px;top:590.76px;width:43.64px;height:13.62px;line-height:15.87px;background:rgb(6,75,40)">168</div>
<div class="c" style="left:802.46px;top:590.76px;width:43.64px;height:13.62px;line-height:15.87px;background:rgb(6,79,40)">178</div>
<div class="c" style="left:846.04px;top:590.76px;width:43.64px;height:13.62px;line-height:15.87px;background:rgb(6,84,40)">192</div>
<div class="c" style="left:889.63px;top:590.76px;width:43.64px;height:13.62px;line-height:15.87px;background:rgb(6,88,41)">201</div>
<div class="c" style="left:933.21px;top:590.76px;width:43.64px;height:13.62px;line-height:15.87px;background:rgb(6,92,41)">211</div>
<div class="rl" style="top:604.32px;height:13.62px;"><b style="top:1.5px">$359</b><i style="top:1.1px">6.8%</i></div>
<div class="c" style="left:61.50px;top:604.32px;width:43.64px;height:13.62px;line-height:15.87px;background:rgb(8,10,40)">4</div>
<div class="c" style="left:105.09px;top:604.32px;width:43.64px;height:13.62px;line-height:15.87px;background:rgb(8,10,40)">6</div>
<div class="c" style="left:148.67px;top:604.32px;width:43.64px;height:13.62px;line-height:15.87px;background:rgb(8,11,40)">7</div>
<div class="c" style="left:192.26px;top:604.32px;width:43.64px;height:13.62px;line-height:15.87px;background:rgb(8,12,40)">10</div>
<div class="c" style="left:235.84px;top:604.32px;width:43.64px;height:13.62px;line-height:15.87px;background:rgb(8,14,40)">14</div>
<div class="c" style="left:279.43px;top:604.32px;width:43.64px;height:13.62px;line-height:15.87px;background:rgb(8,14,40)">15</div>
<div class="c" style="left:323.01px;top:604.32px;width:43.64px;height:13.62px;line-height:15.87px;background:rgb(8,15,40)">18</div>
<div class="c" style="left:366.60px;top:604.32px;width:43.64px;height:13.62px;line-height:15.87px;background:rgb(8,16,40)">20</div>
<div class="c" style="left:410.19px;top:604.32px;width:43.64px;height:13.62px;line-height:15.87px;background:rgb(8,19,40)">28</div>
<div class="c" style="left:453.77px;top:604.32px;width:43.64px;height:13.62px;line-height:15.87px;background:rgb(8,21,40)">32</div>
<div class="c" style="left:497.36px;top:604.32px;width:43.64px;height:13.62px;line-height:15.87px;background:rgb(8,22,40)">34</div>
<div class="c" style="left:540.94px;top:604.32px;width:43.64px;height:13.62px;line-height:15.87px;background:rgb(8,25,40)">42</div>
<div class="c" style="left:584.53px;top:604.32px;width:43.64px;height:13.62px;line-height:15.87px;background:rgb(7,29,40)">52</div>
<div class="c" style="left:628.11px;top:604.32px;width:43.64px;height:13.62px;line-height:15.87px;background:rgb(7,30,40)">55</div>
<div class="c" style="left:671.70px;top:604.32px;width:43.64px;height:13.62px;line-height:15.87px;background:rgb(7,35,40)">67</div>
<div class="c" style="left:715.29px;top:604.32px;width:43.64px;height:13.62px;line-height:15.87px;background:rgb(7,37,40)">72</div>
<div class="c" style="left:758.87px;top:604.32px;width:43.64px;height:13.62px;line-height:15.87px;background:rgb(7,38,40)">76</div>
<div class="c" style="left:802.46px;top:604.32px;width:43.64px;height:13.62px;line-height:15.87px;background:rgb(7,43,40)">87</div>
<div class="c" style="left:846.04px;top:604.32px;width:43.64px;height:13.62px;line-height:15.87px;background:rgb(7,49,40)">104</div>
<div class="c" style="left:889.63px;top:604.32px;width:43.64px;height:13.62px;line-height:15.87px;background:rgb(7,54,40)">116</div>
<div class="c" style="left:933.21px;top:604.32px;width:43.64px;height:13.62px;line-height:15.87px;background:rgb(7,60,40)">130</div>
<div class="rl" style="top:617.89px;height:13.62px;"><b style="top:1.5px">$352</b><i style="top:1.1px">4.7%</i></div>
<div class="c" style="left:61.50px;top:617.89px;width:43.64px;height:13.62px;line-height:15.87px;background:rgb(22,7,40)">-35</div>
<div class="c" style="left:105.09px;top:617.89px;width:43.64px;height:13.62px;line-height:15.87px;background:rgb(23,7,40)">-36</div>
<div class="c" style="left:148.67px;top:617.89px;width:43.64px;height:13.62px;line-height:15.87px;background:rgb(23,7,40)">-37</div>
<div class="c" style="left:192.26px;top:617.89px;width:43.64px;height:13.62px;line-height:15.87px;background:rgb(24,7,40)">-38</div>
<div class="c" style="left:235.84px;top:617.89px;width:43.64px;height:13.62px;line-height:15.87px;background:rgb(24,7,40)">-38</div>
<div class="c" style="left:279.43px;top:617.89px;width:43.64px;height:13.62px;line-height:15.87px;background:rgb(24,7,40)">-38</div>
<div class="c" style="left:323.01px;top:617.89px;width:43.64px;height:13.62px;line-height:15.87px;background:rgb(24,7,40)">-38</div>
<div class="c" style="left:366.60px;top:617.89px;width:43.64px;height:13.62px;line-height:15.87px;background:rgb(24,7,40)">-38</div>
<div class="c" style="left:410.19px;top:617.89px;width:43.64px;height:13.62px;line-height:15.87px;background:rgb(24,7,40)">-38</div>
<div class="c" style="left:453.77px;top:617.89px;width:43.64px;height:13.62px;line-height:15.87px;background:rgb(24,7,40)">-38</div>
<div class="c" style="left:497.36px;top:617.89px;width:43.64px;height:13.62px;line-height:15.87px;background:rgb(23,7,40)">-37</div>
<div class="c" style="left:540.94px;top:617.89px;width:43.64px;height:13.62px;line-height:15.87px;background:rgb(23,7,40)">-36</div>
<div class="c" style="left:584.53px;top:617.89px;width:43.64px;height:13.62px;line-height:15.87px;background:rgb(22,7,40)">-33</div>
<div class="c" style="left:628.11px;top:617.89px;width:43.64px;height:13.62px;line-height:15.87px;background:rgb(21,7,40)">-32</div>
<div class="c" style="left:671.70px;top:617.89px;width:43.64px;height:13.62px;line-height:15.87px;background:rgb(19,7,40)">-27</div>
<div class="c" style="left:715.29px;top:617.89px;width:43.64px;height:13.62px;line-height:15.87px;background:rgb(18,7,40)">-25</div>
<div class="c" style="left:758.87px;top:617.89px;width:43.64px;height:13.62px;line-height:15.87px;background:rgb(18,8,40)">-23</div>
<div class="c" style="left:802.46px;top:617.89px;width:43.64px;height:13.62px;line-height:15.87px;background:rgb(15,8,40)">-17</div>
<div class="c" style="left:846.04px;top:617.89px;width:43.64px;height:13.62px;line-height:15.87px;background:rgb(9,8,40)">-2</div>
<div class="c" style="left:889.63px;top:617.89px;width:43.64px;height:13.62px;line-height:15.87px;background:rgb(8,12,40)">11</div>
<div class="c" style="left:933.21px;top:617.89px;width:43.64px;height:13.62px;line-height:15.87px;background:rgb(8,19,40)">28</div>
<div class="rl" style="top:631.45px;height:13.62px;"><b style="top:1.5px">$344</b><i style="top:1.1px">2.3%</i></div>
<div class="c" style="left:61.50px;top:631.45px;width:43.64px;height:13.62px;line-height:15.87px;background:rgb(27,7,39)">-46</div>
<div class="c" style="left:105.09px;top:631.45px;width:43.64px;height:13.62px;line-height:15.87px;background:rgb(29,7,39)">-51</div>
<div class="c" style="left:148.67px;top:631.45px;width:43.64px;height:13.62px;line-height:15.87px;background:rgb(30,7,39)">-53</div>
<div class="c" style="left:192.26px;top:631.45px;width:43.64px;height:13.62px;line-height:15.87px;background:rgb(32,7,39)">-58</div>
<div class="c" style="left:235.84px;top:631.45px;width:43.64px;height:13.62px;line-height:15.87px;background:rgb(34,7,39)">-64</div>
<div class="c" style="left:279.43px;top:631.45px;width:43.64px;height:13.62px;line-height:15.87px;background:rgb(35,7,39)">-66</div>
<div class="c" style="left:323.01px;top:631.45px;width:43.64px;height:13.62px;line-height:15.87px;background:rgb(37,7,39)">-70</div>
<div class="c" style="left:366.60px;top:631.45px;width:43.64px;height:13.62px;line-height:15.87px;background:rgb(38,7,39)">-72</div>
<div class="c" style="left:410.19px;top:631.45px;width:43.64px;height:13.62px;line-height:15.87px;background:rgb(41,6,39)">-80</div>
<div class="c" style="left:453.77px;top:631.45px;width:43.64px;height:13.62px;line-height:15.87px;background:rgb(43,6,39)">-85</div>
<div class="c" style="left:497.36px;top:631.45px;width:43.64px;height:13.62px;line-height:15.87px;background:rgb(44,6,39)">-87</div>
<div class="c" style="left:540.94px;top:631.45px;width:43.64px;height:13.62px;line-height:15.87px;background:rgb(47,6,39)">-95</div>
<div class="c s" style="left:584.53px;top:631.45px;width:43.64px;height:13.62px;line-height:12.57px;background:rgb(51,6,39)">-103</div>
<div class="c s" style="left:628.11px;top:631.45px;width:43.64px;height:13.62px;line-height:12.57px;background:rgb(52,6,39)">-106</div>
<div class="c s" style="left:671.70px;top:631.45px;width:43.64px;height:13.62px;line-height:12.57px;background:rgb(56,6,39)">-116</div>
<div class="c s" style="left:715.29px;top:631.45px;width:43.64px;height:13.62px;line-height:12.57px;background:rgb(58,6,38)">-120</div>
<div class="c s" style="left:758.87px;top:631.45px;width:43.64px;height:13.62px;line-height:12.57px;background:rgb(59,5,38)">-124</div>
<div class="c s" style="left:802.46px;top:631.45px;width:43.64px;height:13.62px;line-height:12.57px;background:rgb(63,5,38)">-132</div>
<div class="c s" style="left:846.04px;top:631.45px;width:43.64px;height:13.62px;line-height:12.57px;background:rgb(68,5,38)">-145</div>
<div class="c s" style="left:889.63px;top:631.45px;width:43.64px;height:13.62px;line-height:12.57px;background:rgb(69,5,38)">-148</div>
<div class="c s" style="left:933.21px;top:631.45px;width:43.64px;height:13.62px;line-height:12.57px;background:rgb(63,5,38)">-134</div>
<div class="rl" style="top:645.02px;height:13.62px;"><b style="top:1.5px">$336</b><i style="top:1.1px">-0.1%</i></div>
<div class="c" style="left:61.50px;top:645.02px;width:43.64px;height:13.62px;line-height:15.87px;background:rgb(8,8,40)">-1</div>
<div class="c" style="left:105.09px;top:645.02px;width:43.64px;height:13.62px;line-height:15.87px;background:rgb(11,8,40)">-8</div>
<div class="c" style="left:148.67px;top:645.02px;width:43.64px;height:13.62px;line-height:15.87px;background:rgb(13,8,40)">-11</div>
<div class="c" style="left:192.26px;top:645.02px;width:43.64px;height:13.62px;line-height:15.87px;background:rgb(16,8,40)">-19</div>
<div class="c" style="left:235.84px;top:645.02px;width:43.64px;height:13.62px;line-height:15.87px;background:rgb(20,7,40)">-28</div>
<div class="c" style="left:279.43px;top:645.02px;width:43.64px;height:13.62px;line-height:15.87px;background:rgb(21,7,40)">-31</div>
<div class="c" style="left:323.01px;top:645.02px;width:43.64px;height:13.62px;line-height:15.87px;background:rgb(23,7,40)">-37</div>
<div class="c" style="left:366.60px;top:645.02px;width:43.64px;height:13.62px;line-height:15.87px;background:rgb(25,7,39)">-40</div>
<div class="c" style="left:410.19px;top:645.02px;width:43.64px;height:13.62px;line-height:15.87px;background:rgb(30,7,39)">-53</div>
<div class="c" style="left:453.77px;top:645.02px;width:43.64px;height:13.62px;line-height:15.87px;background:rgb(33,7,39)">-60</div>
<div class="c" style="left:497.36px;top:645.02px;width:43.64px;height:13.62px;line-height:15.87px;background:rgb(34,7,39)">-64</div>
<div class="c" style="left:540.94px;top:645.02px;width:43.64px;height:13.62px;line-height:15.87px;background:rgb(39,6,39)">-76</div>
<div class="c" style="left:584.53px;top:645.02px;width:43.64px;height:13.62px;line-height:15.87px;background:rgb(46,6,39)">-91</div>
<div class="c" style="left:628.11px;top:645.02px;width:43.64px;height:13.62px;line-height:15.87px;background:rgb(48,6,39)">-96</div>
<div class="c s" style="left:671.70px;top:645.02px;width:43.64px;height:13.62px;line-height:12.57px;background:rgb(55,6,39)">-114</div>
<div class="c s" style="left:715.29px;top:645.02px;width:43.64px;height:13.62px;line-height:12.57px;background:rgb(58,6,38)">-122</div>
<div class="c s" style="left:758.87px;top:645.02px;width:43.64px;height:13.62px;line-height:12.57px;background:rgb(62,5,38)">-130</div>
<div class="c s" style="left:802.46px;top:645.02px;width:43.64px;height:13.62px;line-height:12.57px;background:rgb(70,5,38)">-149</div>
<div class="c s" style="left:846.04px;top:645.02px;width:43.64px;height:13.62px;line-height:12.57px;background:rgb(87,4,38)">-192</div>
<div class="c s" style="left:889.63px;top:645.02px;width:43.64px;height:13.62px;line-height:12.57px;background:rgb(106,3,37)">-238</div>
<div class="c s" style="left:933.21px;top:645.02px;width:43.64px;height:13.62px;line-height:12.57px;background:rgb(156,1,35)">-359</div>
<div class="rl" style="top:658.58px;height:13.62px;"><b style="top:1.5px">$329</b><i style="top:1.1px">-2.1%</i></div>
<div class="c" style="left:61.50px;top:658.58px;width:43.64px;height:13.62px;line-height:15.87px;background:rgb(7,42,40)">96</div>
<div class="c" style="left:105.09px;top:658.58px;width:43.64px;height:13.62px;line-height:15.87px;background:rgb(7,39,40)">88</div>
<div class="c" style="left:148.67px;top:658.58px;width:43.64px;height:13.62px;line-height:15.87px;background:rgb(7,38,40)">86</div>
<div class="c" style="left:192.26px;top:658.58px;width:43.64px;height:13.62px;line-height:15.87px;background:rgb(7,35,40)">78</div>
<div class="c" style="left:235.84px;top:658.58px;width:43.64px;height:13.62px;line-height:15.87px;background:rgb(7,33,40)">70</div>
<div class="c" style="left:279.43px;top:658.58px;width:43.64px;height:13.62px;line-height:15.87px;background:rgb(7,31,40)">67</div>
<div class="c" style="left:323.01px;top:658.58px;width:43.64px;height:13.62px;line-height:15.87px;background:rgb(7,30,40)">62</div>
<div class="c" style="left:366.60px;top:658.58px;width:43.64px;height:13.62px;line-height:15.87px;background:rgb(7,29,40)">59</div>
<div class="c" style="left:410.19px;top:658.58px;width:43.64px;height:13.62px;line-height:15.87px;background:rgb(8,24,40)">47</div>
<div class="c" style="left:453.77px;top:658.58px;width:43.64px;height:13.62px;line-height:15.87px;background:rgb(8,22,40)">41</div>
<div class="c" style="left:497.36px;top:658.58px;width:43.64px;height:13.62px;line-height:15.87px;background:rgb(8,21,40)">38</div>
<div class="c" style="left:540.94px;top:658.58px;width:43.64px;height:13.62px;line-height:15.87px;background:rgb(8,18,40)">29</div>
<div class="c" style="left:584.53px;top:658.58px;width:43.64px;height:13.62px;line-height:15.87px;background:rgb(8,15,40)">19</div>
<div class="c" style="left:628.11px;top:658.58px;width:43.64px;height:13.62px;line-height:15.87px;background:rgb(8,14,40)">16</div>
<div class="c" style="left:671.70px;top:658.58px;width:43.64px;height:13.62px;line-height:15.87px;background:rgb(8,10,40)">6</div>
<div class="c" style="left:715.29px;top:658.58px;width:43.64px;height:13.62px;line-height:15.87px;background:rgb(8,9,40)">3</div>
<div class="c" style="left:758.87px;top:658.58px;width:43.64px;height:13.62px;line-height:15.87px;background:rgb(8,8,40)">-1</div>
<div class="c" style="left:802.46px;top:658.58px;width:43.64px;height:13.62px;line-height:15.87px;background:rgb(12,8,40)">-9</div>
<div class="c" style="left:846.04px;top:658.58px;width:43.64px;height:13.62px;line-height:15.87px;background:rgb(18,8,40)">-23</div>
<div class="c" style="left:889.63px;top:658.58px;width:43.64px;height:13.62px;line-height:15.87px;background:rgb(22,7,40)">-34</div>
<div class="c" style="left:933.21px;top:658.58px;width:43.64px;height:13.62px;line-height:15.87px;background:rgb(17,8,40)">-21</div>
<div class="rl" style="top:672.15px;height:13.62px;"><b style="top:1.5px">$321</b><i style="top:1.1px">-4.5%</i></div>
<div class="c" style="left:61.50px;top:672.15px;width:43.64px;height:13.62px;line-height:15.87px;background:rgb(6,104,41)">274</div>
<div class="c" style="left:105.09px;top:672.15px;width:43.64px;height:13.62px;line-height:15.87px;background:rgb(6,103,41)">270</div>
<div class="c" style="left:148.67px;top:672.15px;width:43.64px;height:13.62px;line-height:15.87px;background:rgb(6,102,41)">268</div>
<div class="c" style="left:192.26px;top:672.15px;width:43.64px;height:13.62px;line-height:15.87px;background:rgb(6,100,41)">264</div>
<div class="c" style="left:235.84px;top:672.15px;width:43.64px;height:13.62px;line-height:15.87px;background:rgb(6,99,41)">259</div>
<div class="c" style="left:279.43px;top:672.15px;width:43.64px;height:13.62px;line-height:15.87px;background:rgb(6,98,41)">258</div>
<div class="c" style="left:323.01px;top:672.15px;width:43.64px;height:13.62px;line-height:15.87px;background:rgb(6,97,41)">255</div>
<div class="c" style="left:366.60px;top:672.15px;width:43.64px;height:13.62px;line-height:15.87px;background:rgb(6,97,41)">254</div>
<div class="c" style="left:410.19px;top:672.15px;width:43.64px;height:13.62px;line-height:15.87px;background:rgb(6,95,41)">249</div>
<div class="c" style="left:453.77px;top:672.15px;width:43.64px;height:13.62px;line-height:15.87px;background:rgb(6,95,41)">247</div>
<div class="c" style="left:497.36px;top:672.15px;width:43.64px;height:13.62px;line-height:15.87px;background:rgb(6,95,41)">247</div>
<div class="c" style="left:540.94px;top:672.15px;width:43.64px;height:13.62px;line-height:15.87px;background:rgb(6,94,41)">246</div>
<div class="c" style="left:584.53px;top:672.15px;width:43.64px;height:13.62px;line-height:15.87px;background:rgb(6,95,41)">248</div>
<div class="c" style="left:628.11px;top:672.15px;width:43.64px;height:13.62px;line-height:15.87px;background:rgb(6,95,41)">249</div>
<div class="c" style="left:671.70px;top:672.15px;width:43.64px;height:13.62px;line-height:15.87px;background:rgb(6,98,41)">257</div>
<div class="c" style="left:715.29px;top:672.15px;width:43.64px;height:13.62px;line-height:15.87px;background:rgb(6,99,41)">261</div>
<div class="c" style="left:758.87px;top:672.15px;width:43.64px;height:13.62px;line-height:15.87px;background:rgb(6,101,41)">266</div>
<div class="c" style="left:802.46px;top:672.15px;width:43.64px;height:13.62px;line-height:15.87px;background:rgb(5,106,41)">280</div>
<div class="c" style="left:846.04px;top:672.15px;width:43.64px;height:13.62px;line-height:15.87px;background:rgb(5,118,41)">314</div>
<div class="c" style="left:889.63px;top:672.15px;width:43.64px;height:13.62px;line-height:15.87px;background:rgb(4,146,41)">346</div>
<div class="c" style="left:933.21px;top:672.15px;width:43.64px;height:13.62px;line-height:15.87px;background:rgb(4,162,41)">388</div>
<div class="rl" style="top:685.71px;height:13.62px;"><b style="top:1.5px">$313</b><i style="top:1.1px">-6.9%</i></div>
<div class="c" style="left:61.50px;top:685.71px;width:43.64px;height:13.62px;line-height:15.87px;background:rgb(2,171,50)">517</div>
<div class="c" style="left:105.09px;top:685.71px;width:43.64px;height:13.62px;line-height:15.87px;background:rgb(2,171,50)">517</div>
<div class="c" style="left:148.67px;top:685.71px;width:43.64px;height:13.62px;line-height:15.87px;background:rgb(2,171,50)">517</div>
<div class="c" style="left:192.26px;top:685.71px;width:43.64px;height:13.62px;line-height:15.87px;background:rgb(2,171,50)">516</div>
<div class="c" style="left:235.84px;top:685.71px;width:43.64px;height:13.62px;line-height:15.87px;background:rgb(2,171,50)">517</div>
<div class="c" style="left:279.43px;top:685.71px;width:43.64px;height:13.62px;line-height:15.87px;background:rgb(2,171,50)">517</div>
<div class="c" style="left:323.01px;top:685.71px;width:43.64px;height:13.62px;line-height:15.87px;background:rgb(2,171,50)">517</div>
<div class="c" style="left:366.60px;top:685.71px;width:43.64px;height:13.62px;line-height:15.87px;background:rgb(2,171,50)">517</div>
<div class="c" style="left:410.19px;top:685.71px;width:43.64px;height:13.62px;line-height:15.87px;background:rgb(2,171,50)">519</div>
<div class="c" style="left:453.77px;top:685.71px;width:43.64px;height:13.62px;line-height:15.87px;background:rgb(2,171,50)">521</div>
<div class="c" style="left:497.36px;top:685.71px;width:43.64px;height:13.62px;line-height:15.87px;background:rgb(2,171,50)">522</div>
<div class="c" style="left:540.94px;top:685.71px;width:43.64px;height:13.62px;line-height:15.87px;background:rgb(2,171,50)">526</div>
<div class="c" style="left:584.53px;top:685.71px;width:43.64px;height:13.62px;line-height:15.87px;background:rgb(2,172,50)">533</div>
<div class="c" style="left:628.11px;top:685.71px;width:43.64px;height:13.62px;line-height:15.87px;background:rgb(2,172,50)">536</div>
<div class="c" style="left:671.70px;top:685.71px;width:43.64px;height:13.62px;line-height:15.87px;background:rgb(2,172,50)">548</div>
<div class="c" style="left:715.29px;top:685.71px;width:43.64px;height:13.62px;line-height:15.87px;background:rgb(2,172,50)">553</div>
<div class="c" style="left:758.87px;top:685.71px;width:43.64px;height:13.62px;line-height:15.87px;background:rgb(2,172,50)">560</div>
<div class="c" style="left:802.46px;top:685.71px;width:43.64px;height:13.62px;line-height:15.87px;background:rgb(2,173,50)">575</div>
<div class="c" style="left:846.04px;top:685.71px;width:43.64px;height:13.62px;line-height:15.87px;background:rgb(2,174,51)">608</div>
<div class="c" style="left:889.63px;top:685.71px;width:43.64px;height:13.62px;line-height:15.87px;background:rgb(2,175,51)">640</div>
<div class="c" style="left:933.21px;top:685.71px;width:43.64px;height:13.62px;line-height:15.87px;background:rgb(2,176,51)">683</div>
<div class="rl" style="top:699.28px;height:13.62px;"><b style="top:1.5px">$306</b><i style="top:1.1px">-9%</i></div>
<div class="c" style="left:61.50px;top:699.28px;width:43.64px;height:13.62px;line-height:15.87px;background:rgb(2,179,52)">766</div>
<div class="c" style="left:105.09px;top:699.28px;width:43.64px;height:13.62px;line-height:15.87px;background:rgb(2,179,52)">770</div>
<div class="c" style="left:148.67px;top:699.28px;width:43.64px;height:13.62px;line-height:15.87px;background:rgb(2,179,52)">771</div>
<div class="c" style="left:192.26px;top:699.28px;width:43.64px;height:13.62px;line-height:15.87px;background:rgb(2,179,52)">774</div>
<div class="c" style="left:235.84px;top:699.28px;width:43.64px;height:13.62px;line-height:15.87px;background:rgb(2,179,52)">777</div>
<div class="c" style="left:279.43px;top:699.28px;width:43.64px;height:13.62px;line-height:15.87px;background:rgb(2,179,52)">778</div>
<div class="c" style="left:323.01px;top:699.28px;width:43.64px;height:13.62px;line-height:15.87px;background:rgb(2,179,52)">780</div>
<div class="c" style="left:366.60px;top:699.28px;width:43.64px;height:13.62px;line-height:15.87px;background:rgb(2,179,52)">781</div>
<div class="c" style="left:410.19px;top:699.28px;width:43.64px;height:13.62px;line-height:15.87px;background:rgb(2,180,52)">786</div>
<div class="c" style="left:453.77px;top:699.28px;width:43.64px;height:13.62px;line-height:15.87px;background:rgb(2,180,52)">788</div>
<div class="c" style="left:497.36px;top:699.28px;width:43.64px;height:13.62px;line-height:15.87px;background:rgb(2,180,52)">789</div>
<div class="c" style="left:540.94px;top:699.28px;width:43.64px;height:13.62px;line-height:15.87px;background:rgb(2,180,52)">791</div>
<div class="c" style="left:584.53px;top:699.28px;width:43.64px;height:13.62px;line-height:15.87px;background:rgb(2,180,52)">794</div>
<div class="c" style="left:628.11px;top:699.28px;width:43.64px;height:13.62px;line-height:15.87px;background:rgb(2,180,52)">795</div>
<div class="c" style="left:671.70px;top:699.28px;width:43.64px;height:13.62px;line-height:15.87px;background:rgb(2,180,52)">796</div>
<div class="c" style="left:715.29px;top:699.28px;width:43.64px;height:13.62px;line-height:15.87px;background:rgb(2,180,52)">796</div>
<div class="c" style="left:758.87px;top:699.28px;width:43.64px;height:13.62px;line-height:15.87px;background:rgb(2,180,52)">796</div>
<div class="c" style="left:802.46px;top:699.28px;width:43.64px;height:13.62px;line-height:15.87px;background:rgb(2,180,52)">796</div>
<div class="c" style="left:846.04px;top:699.28px;width:43.64px;height:13.62px;line-height:15.87px;background:rgb(2,180,52)">797</div>
<div class="c" style="left:889.63px;top:699.28px;width:43.64px;height:13.62px;line-height:15.87px;background:rgb(2,180,52)">803</div>
<div class="c" style="left:933.21px;top:699.28px;width:43.64px;height:13.62px;line-height:15.87px;background:rgb(2,181,53)">836</div>
<div class="rl" style="top:712.84px;height:13.62px;"><b style="top:1.5px">$298</b><i style="top:1.1px">-11%</i></div>
<div class="c s" style="left:61.50px;top:712.84px;width:43.64px;height:13.62px;line-height:12.57px;background:rgb(2,188,55)">1074</div>
<div class="c s" style="left:105.09px;top:712.84px;width:43.64px;height:13.62px;line-height:12.57px;background:rgb(2,188,55)">1080</div>
<div class="c s" style="left:148.67px;top:712.84px;width:43.64px;height:13.62px;line-height:12.57px;background:rgb(2,188,55)">1082</div>
<div class="c s" style="left:192.26px;top:712.84px;width:43.64px;height:13.62px;line-height:12.57px;background:rgb(2,188,55)">1088</div>
<div class="c s" style="left:235.84px;top:712.84px;width:43.64px;height:13.62px;line-height:12.57px;background:rgb(2,188,55)">1093</div>
<div class="c s" style="left:279.43px;top:712.84px;width:43.64px;height:13.62px;line-height:12.57px;background:rgb(2,188,55)">1094</div>
<div class="c s" style="left:323.01px;top:712.84px;width:43.64px;height:13.62px;line-height:12.57px;background:rgb(2,188,55)">1097</div>
<div class="c s" style="left:366.60px;top:712.84px;width:43.64px;height:13.62px;line-height:12.57px;background:rgb(2,189,55)">1099</div>
<div class="c s" style="left:410.19px;top:712.84px;width:43.64px;height:13.62px;line-height:12.57px;background:rgb(2,189,55)">1102</div>
<div class="c s" style="left:453.77px;top:712.84px;width:43.64px;height:13.62px;line-height:12.57px;background:rgb(2,189,55)">1103</div>
<div class="c s" style="left:497.36px;top:712.84px;width:43.64px;height:13.62px;line-height:12.57px;background:rgb(2,189,55)">1103</div>
<div class="c s" style="left:540.94px;top:712.84px;width:43.64px;height:13.62px;line-height:12.57px;background:rgb(2,189,55)">1102</div>
<div class="c s" style="left:584.53px;top:712.84px;width:43.64px;height:13.62px;line-height:12.57px;background:rgb(2,188,55)">1097</div>
<div class="c s" style="left:628.11px;top:712.84px;width:43.64px;height:13.62px;line-height:12.57px;background:rgb(2,188,55)">1095</div>
<div class="c s" style="left:671.70px;top:712.84px;width:43.64px;height:13.62px;line-height:12.57px;background:rgb(2,188,55)">1083</div>
<div class="c s" style="left:715.29px;top:712.84px;width:43.64px;height:13.62px;line-height:12.57px;background:rgb(2,188,55)">1077</div>
<div class="c s" style="left:758.87px;top:712.84px;width:43.64px;height:13.62px;line-height:12.57px;background:rgb(2,188,55)">1071</div>
<div class="c s" style="left:802.46px;top:712.84px;width:43.64px;height:13.62px;line-height:12.57px;background:rgb(2,187,55)">1053</div>
<div class="c s" style="left:846.04px;top:712.84px;width:43.64px;height:13.62px;line-height:12.57px;background:rgb(2,186,54)">1012</div>
<div class="c" style="left:889.63px;top:712.84px;width:43.64px;height:13.62px;line-height:15.87px;background:rgb(2,185,54)">965</div>
<div class="c" style="left:933.21px;top:712.84px;width:43.64px;height:13.62px;line-height:15.87px;background:rgb(2,182,53)">879</div>
<div class="rl" style="top:726.41px;height:13.62px;"><b style="top:1.5px">$290</b><i style="top:1.1px">-14%</i></div>
<div class="c s" style="left:61.50px;top:726.41px;width:43.64px;height:13.62px;line-height:12.57px;background:rgb(2,195,58)">1387</div>
<div class="c s" style="left:105.09px;top:726.41px;width:43.64px;height:13.62px;line-height:12.57px;background:rgb(2,195,58)">1395</div>
<div class="c s" style="left:148.67px;top:726.41px;width:43.64px;height:13.62px;line-height:12.57px;background:rgb(2,195,58)">1398</div>
<div class="c s" style="left:192.26px;top:726.41px;width:43.64px;height:13.62px;line-height:12.57px;background:rgb(2,195,58)">1405</div>
<div class="c s" style="left:235.84px;top:726.41px;width:43.64px;height:13.62px;line-height:12.57px;background:rgb(2,195,58)">1412</div>
<div class="c s" style="left:279.43px;top:726.41px;width:43.64px;height:13.62px;line-height:12.57px;background:rgb(2,195,58)">1414</div>
<div class="c s" style="left:323.01px;top:726.41px;width:43.64px;height:13.62px;line-height:12.57px;background:rgb(2,195,58)">1417</div>
<div class="c s" style="left:366.60px;top:726.41px;width:43.64px;height:13.62px;line-height:12.57px;background:rgb(2,195,58)">1419</div>
<div class="c s" style="left:410.19px;top:726.41px;width:43.64px;height:13.62px;line-height:12.57px;background:rgb(2,195,58)">1424</div>
<div class="c s" style="left:453.77px;top:726.41px;width:43.64px;height:13.62px;line-height:12.57px;background:rgb(2,195,58)">1425</div>
<div class="c s" style="left:497.36px;top:726.41px;width:43.64px;height:13.62px;line-height:12.57px;background:rgb(2,195,58)">1425</div>
<div class="c s" style="left:540.94px;top:726.41px;width:43.64px;height:13.62px;line-height:12.57px;background:rgb(2,195,58)">1423</div>
<div class="c s" style="left:584.53px;top:726.41px;width:43.64px;height:13.62px;line-height:12.57px;background:rgb(2,195,58)">1419</div>
<div class="c s" style="left:628.11px;top:726.41px;width:43.64px;height:13.62px;line-height:12.57px;background:rgb(2,195,58)">1416</div>
<div class="c s" style="left:671.70px;top:726.41px;width:43.64px;height:13.62px;line-height:12.57px;background:rgb(2,195,58)">1405</div>
<div class="c s" style="left:715.29px;top:726.41px;width:43.64px;height:13.62px;line-height:12.57px;background:rgb(2,195,58)">1399</div>
<div class="c s" style="left:758.87px;top:726.41px;width:43.64px;height:13.62px;line-height:12.57px;background:rgb(2,195,58)">1393</div>
<div class="c s" style="left:802.46px;top:726.41px;width:43.64px;height:13.62px;line-height:12.57px;background:rgb(2,195,58)">1377</div>
<div class="c s" style="left:846.04px;top:726.41px;width:43.64px;height:13.62px;line-height:12.57px;background:rgb(2,194,57)">1342</div>
<div class="c s" style="left:889.63px;top:726.41px;width:43.64px;height:13.62px;line-height:12.57px;background:rgb(2,193,57)">1307</div>
<div class="c s" style="left:933.21px;top:726.41px;width:43.64px;height:13.62px;line-height:12.57px;background:rgb(2,192,57)">1277</div>
<div class="rl" style="top:739.97px;height:13.62px;"><b style="top:1.5px">$283</b><i style="top:1.1px">-16%</i></div>
<div class="c s" style="left:61.50px;top:739.97px;width:43.64px;height:13.62px;line-height:12.57px;background:rgb(2,200,60)">1654</div>
<div class="c s" style="left:105.09px;top:739.97px;width:43.64px;height:13.62px;line-height:12.57px;background:rgb(2,200,60)">1664</div>
<div class="c s" style="left:148.67px;top:739.97px;width:43.64px;height:13.62px;line-height:12.57px;background:rgb(2,200,60)">1667</div>
<div class="c s" style="left:192.26px;top:739.97px;width:43.64px;height:13.62px;line-height:12.57px;background:rgb(2,200,60)">1676</div>
<div class="c s" style="left:235.84px;top:739.97px;width:43.64px;height:13.62px;line-height:12.57px;background:rgb(2,200,60)">1685</div>
<div class="c s" style="left:279.43px;top:739.97px;width:43.64px;height:13.62px;line-height:12.57px;background:rgb(2,200,60)">1687</div>
<div class="c s" style="left:323.01px;top:739.97px;width:43.64px;height:13.62px;line-height:12.57px;background:rgb(2,200,60)">1693</div>
<div class="c s" style="left:366.60px;top:739.97px;width:43.64px;height:13.62px;line-height:12.57px;background:rgb(2,200,60)">1695</div>
<div class="c s" style="left:410.19px;top:739.97px;width:43.64px;height:13.62px;line-height:12.57px;background:rgb(2,201,60)">1704</div>
<div class="c s" style="left:453.77px;top:739.97px;width:43.64px;height:13.62px;line-height:12.57px;background:rgb(2,201,60)">1707</div>
<div class="c s" style="left:497.36px;top:739.97px;width:43.64px;height:13.62px;line-height:12.57px;background:rgb(2,201,60)">1709</div>
<div class="c s" style="left:540.94px;top:739.97px;width:43.64px;height:13.62px;line-height:12.57px;background:rgb(2,201,60)">1713</div>
<div class="c s" style="left:584.53px;top:739.97px;width:43.64px;height:13.62px;line-height:12.57px;background:rgb(2,201,60)">1716</div>
<div class="c s" style="left:628.11px;top:739.97px;width:43.64px;height:13.62px;line-height:12.57px;background:rgb(2,201,60)">1716</div>
<div class="c s" style="left:671.70px;top:739.97px;width:43.64px;height:13.62px;line-height:12.57px;background:rgb(2,201,60)">1717</div>
<div class="c s" style="left:715.29px;top:739.97px;width:43.64px;height:13.62px;line-height:12.57px;background:rgb(2,201,60)">1717</div>
<div class="c s" style="left:758.87px;top:739.97px;width:43.64px;height:13.62px;line-height:12.57px;background:rgb(2,201,60)">1717</div>
<div class="c s" style="left:802.46px;top:739.97px;width:43.64px;height:13.62px;line-height:12.57px;background:rgb(2,201,60)">1718</div>
<div class="c s" style="left:846.04px;top:739.97px;width:43.64px;height:13.62px;line-height:12.57px;background:rgb(2,201,60)">1722</div>
<div class="c s" style="left:889.63px;top:739.97px;width:43.64px;height:13.62px;line-height:12.57px;background:rgb(2,201,60)">1734</div>
<div class="c s" style="left:933.21px;top:739.97px;width:43.64px;height:13.62px;line-height:12.57px;background:rgb(2,202,61)">1770</div>
<div class="rl" style="top:753.54px;height:13.62px;"><b style="top:1.5px">$275</b><i style="top:1.1px">-18%</i></div>
<div class="c s" style="left:61.50px;top:753.54px;width:43.64px;height:13.62px;line-height:12.57px;background:rgb(2,205,62)">1941</div>
<div class="c s" style="left:105.09px;top:753.54px;width:43.64px;height:13.62px;line-height:12.57px;background:rgb(2,205,62)">1953</div>
<div class="c s" style="left:148.67px;top:753.54px;width:43.64px;height:13.62px;line-height:12.57px;background:rgb(2,205,62)">1957</div>
<div class="c s" style="left:192.26px;top:753.54px;width:43.64px;height:13.62px;line-height:12.57px;background:rgb(2,205,62)">1969</div>
<div class="c s" style="left:235.84px;top:753.54px;width:43.64px;height:13.62px;line-height:12.57px;background:rgb(2,205,62)">1981</div>
<div class="c s" style="left:279.43px;top:753.54px;width:43.64px;height:13.62px;line-height:12.57px;background:rgb(2,206,62)">1985</div>
<div class="c s" style="left:323.01px;top:753.54px;width:43.64px;height:13.62px;line-height:12.57px;background:rgb(2,206,62)">1993</div>
<div class="c s" style="left:366.60px;top:753.54px;width:43.64px;height:13.62px;line-height:12.57px;background:rgb(2,206,62)">1997</div>
<div class="c s" style="left:410.19px;top:753.54px;width:43.64px;height:13.62px;line-height:12.57px;background:rgb(2,206,62)">2013</div>
<div class="c s" style="left:453.77px;top:753.54px;width:43.64px;height:13.62px;line-height:12.57px;background:rgb(2,206,62)">2021</div>
<div class="c s" style="left:497.36px;top:753.54px;width:43.64px;height:13.62px;line-height:12.57px;background:rgb(2,206,62)">2026</div>
<div class="c s" style="left:540.94px;top:753.54px;width:43.64px;height:13.62px;line-height:12.57px;background:rgb(2,206,63)">2039</div>
<div class="c s" style="left:584.53px;top:753.54px;width:43.64px;height:13.62px;line-height:12.57px;background:rgb(2,206,63)">2054</div>
<div class="c s" style="left:628.11px;top:753.54px;width:43.64px;height:13.62px;line-height:12.57px;background:rgb(2,206,63)">2059</div>
<div class="c s" style="left:671.70px;top:753.54px;width:43.64px;height:13.62px;line-height:12.57px;background:rgb(2,207,63)">2077</div>
<div class="c s" style="left:715.29px;top:753.54px;width:43.64px;height:13.62px;line-height:12.57px;background:rgb(2,207,63)">2084</div>
<div class="c s" style="left:758.87px;top:753.54px;width:43.64px;height:13.62px;line-height:12.57px;background:rgb(2,207,63)">2091</div>
<div class="c s" style="left:802.46px;top:753.54px;width:43.64px;height:13.62px;line-height:12.57px;background:rgb(2,207,63)">2108</div>
<div class="c s" style="left:846.04px;top:753.54px;width:43.64px;height:13.62px;line-height:12.57px;background:rgb(2,207,63)">2142</div>
<div class="c s" style="left:889.63px;top:753.54px;width:43.64px;height:13.62px;line-height:12.57px;background:rgb(2,208,63)">2171</div>
<div class="c s" style="left:933.21px;top:753.54px;width:43.64px;height:13.62px;line-height:12.57px;background:rgb(2,208,63)">2206</div>
<div class="rl" style="top:767.10px;height:13.62px;"><b style="top:1.5px">$267</b><i style="top:1.1px">-21%</i></div>
<div class="c s" style="left:61.50px;top:767.10px;width:43.64px;height:13.62px;line-height:12.57px;background:rgb(2,208,63)">2200</div>
<div class="c s" style="left:105.09px;top:767.10px;width:43.64px;height:13.62px;line-height:12.57px;background:rgb(2,208,63)">2214</div>
<div class="c s" style="left:148.67px;top:767.10px;width:43.64px;height:13.62px;line-height:12.57px;background:rgb(2,208,64)">2219</div>
<div class="c s" style="left:192.26px;top:767.10px;width:43.64px;height:13.62px;line-height:12.57px;background:rgb(2,209,64)">2234</div>
<div class="c s" style="left:235.84px;top:767.10px;width:43.64px;height:13.62px;line-height:12.57px;background:rgb(2,209,64)">2249</div>
<div class="c s" style="left:279.43px;top:767.10px;width:43.64px;height:13.62px;line-height:12.57px;background:rgb(2,209,64)">2255</div>
<div class="c s" style="left:323.01px;top:767.10px;width:43.64px;height:13.62px;line-height:12.57px;background:rgb(2,209,64)">2265</div>
<div class="c s" style="left:366.60px;top:767.10px;width:43.64px;height:13.62px;line-height:12.57px;background:rgb(2,209,64)">2271</div>
<div class="c s" style="left:410.19px;top:767.10px;width:43.64px;height:13.62px;line-height:12.57px;background:rgb(2,209,64)">2294</div>
<div class="c s" style="left:453.77px;top:767.10px;width:43.64px;height:13.62px;line-height:12.57px;background:rgb(2,209,64)">2306</div>
<div class="c s" style="left:497.36px;top:767.10px;width:43.64px;height:13.62px;line-height:12.57px;background:rgb(2,209,64)">2313</div>
<div class="c s" style="left:540.94px;top:767.10px;width:43.64px;height:13.62px;line-height:12.57px;background:rgb(2,210,64)">2333</div>
<div class="c s" style="left:584.53px;top:767.10px;width:43.64px;height:13.62px;line-height:12.57px;background:rgb(2,210,64)">2356</div>
<div class="c s" style="left:628.11px;top:767.10px;width:43.64px;height:13.62px;line-height:12.57px;background:rgb(2,210,64)">2364</div>
<div class="c s" style="left:671.70px;top:767.10px;width:43.64px;height:13.62px;line-height:12.57px;background:rgb(2,210,64)">2391</div>
<div class="c s" style="left:715.29px;top:767.10px;width:43.64px;height:13.62px;line-height:12.57px;background:rgb(2,211,65)">2401</div>
<div class="c s" style="left:758.87px;top:767.10px;width:43.64px;height:13.62px;line-height:12.57px;background:rgb(2,211,65)">2411</div>
<div class="c s" style="left:802.46px;top:767.10px;width:43.64px;height:13.62px;line-height:12.57px;background:rgb(2,211,65)">2433</div>
<div class="c s" style="left:846.04px;top:767.10px;width:43.64px;height:13.62px;line-height:12.57px;background:rgb(2,211,65)">2468</div>
<div class="c s" style="left:889.63px;top:767.10px;width:43.64px;height:13.62px;line-height:12.57px;background:rgb(2,212,65)">2493</div>
<div class="c s" style="left:933.21px;top:767.10px;width:43.64px;height:13.62px;line-height:12.57px;background:rgb(2,212,65)">2521</div>
<div class="rl" style="top:780.67px;height:13.62px;"><b style="top:1.5px">$260</b><i style="top:1.1px">-23%</i></div>
<div class="c s" style="left:61.50px;top:780.67px;width:43.64px;height:13.62px;line-height:12.57px;background:rgb(2,210,64)">2398</div>
<div class="c s" style="left:105.09px;top:780.67px;width:43.64px;height:13.62px;line-height:12.57px;background:rgb(2,211,65)">2414</div>
<div class="c s" style="left:148.67px;top:780.67px;width:43.64px;height:13.62px;line-height:12.57px;background:rgb(2,211,65)">2419</div>
<div class="c s" style="left:192.26px;top:780.67px;width:43.64px;height:13.62px;line-height:12.57px;background:rgb(2,211,65)">2436</div>
<div class="c s" style="left:235.84px;top:780.67px;width:43.64px;height:13.62px;line-height:12.57px;background:rgb(2,211,65)">2453</div>
<div class="c s" style="left:279.43px;top:780.67px;width:43.64px;height:13.62px;line-height:12.57px;background:rgb(2,211,65)">2459</div>
<div class="c s" style="left:323.01px;top:780.67px;width:43.64px;height:13.62px;line-height:12.57px;background:rgb(2,211,65)">2471</div>
<div class="c s" style="left:366.60px;top:780.67px;width:43.64px;height:13.62px;line-height:12.57px;background:rgb(2,211,65)">2477</div>
<div class="c s" style="left:410.19px;top:780.67px;width:43.64px;height:13.62px;line-height:12.57px;background:rgb(2,212,65)">2503</div>
<div class="c s" style="left:453.77px;top:780.67px;width:43.64px;height:13.62px;line-height:12.57px;background:rgb(2,212,65)">2517</div>
<div class="c s" style="left:497.36px;top:780.67px;width:43.64px;height:13.62px;line-height:12.57px;background:rgb(2,212,65)">2524</div>
<div class="c s" style="left:540.94px;top:780.67px;width:43.64px;height:13.62px;line-height:12.57px;background:rgb(2,212,65)">2546</div>
<div class="c s" style="left:584.53px;top:780.67px;width:43.64px;height:13.62px;line-height:12.57px;background:rgb(2,213,65)">2571</div>
<div class="c s" style="left:628.11px;top:780.67px;width:43.64px;height:13.62px;line-height:12.57px;background:rgb(2,213,65)">2579</div>
<div class="c s" style="left:671.70px;top:780.67px;width:43.64px;height:13.62px;line-height:12.57px;background:rgb(2,213,66)">2606</div>
<div class="c s" style="left:715.29px;top:780.67px;width:43.64px;height:13.62px;line-height:12.57px;background:rgb(2,213,66)">2615</div>
<div class="c s" style="left:758.87px;top:780.67px;width:43.64px;height:13.62px;line-height:12.57px;background:rgb(2,213,66)">2624</div>
<div class="c s" style="left:802.46px;top:780.67px;width:43.64px;height:13.62px;line-height:12.57px;background:rgb(2,213,66)">2643</div>
<div class="c s" style="left:846.04px;top:780.67px;width:43.64px;height:13.62px;line-height:12.57px;background:rgb(2,214,66)">2672</div>
<div class="c s" style="left:889.63px;top:780.67px;width:43.64px;height:13.62px;line-height:12.57px;background:rgb(2,214,66)">2692</div>
<div class="c s" style="left:933.21px;top:780.67px;width:43.64px;height:13.62px;line-height:12.57px;background:rgb(2,214,66)">2713</div>
<div class="rl" style="top:794.23px;height:13.62px;"><b style="top:1.5px">$252</b><i style="top:1.1px">-25%</i></div>
<div class="c s" style="left:61.50px;top:794.23px;width:43.64px;height:13.62px;line-height:12.57px;background:rgb(2,213,66)">2586</div>
<div class="c s" style="left:105.09px;top:794.23px;width:43.64px;height:13.62px;line-height:12.57px;background:rgb(2,213,66)">2602</div>
<div class="c s" style="left:148.67px;top:794.23px;width:43.64px;height:13.62px;line-height:12.57px;background:rgb(2,213,66)">2607</div>
<div class="c s" style="left:192.26px;top:794.23px;width:43.64px;height:13.62px;line-height:12.57px;background:rgb(2,213,66)">2624</div>
<div class="c s" style="left:235.84px;top:794.23px;width:43.64px;height:13.62px;line-height:12.57px;background:rgb(2,213,66)">2641</div>
<div class="c s" style="left:279.43px;top:794.23px;width:43.64px;height:13.62px;line-height:12.57px;background:rgb(2,213,66)">2647</div>
<div class="c s" style="left:323.01px;top:794.23px;width:43.64px;height:13.62px;line-height:12.57px;background:rgb(2,214,66)">2659</div>
<div class="c s" style="left:366.60px;top:794.23px;width:43.64px;height:13.62px;line-height:12.57px;background:rgb(2,214,66)">2665</div>
<div class="c s" style="left:410.19px;top:794.23px;width:43.64px;height:13.62px;line-height:12.57px;background:rgb(2,214,66)">2690</div>
<div class="c s" style="left:453.77px;top:794.23px;width:43.64px;height:13.62px;line-height:12.57px;background:rgb(2,214,66)">2703</div>
<div class="c s" style="left:497.36px;top:794.23px;width:43.64px;height:13.62px;line-height:12.57px;background:rgb(2,214,66)">2710</div>
<div class="c s" style="left:540.94px;top:794.23px;width:43.64px;height:13.62px;line-height:12.57px;background:rgb(2,214,66)">2730</div>
<div class="c s" style="left:584.53px;top:794.23px;width:43.64px;height:13.62px;line-height:12.57px;background:rgb(2,215,66)">2751</div>
<div class="c s" style="left:628.11px;top:794.23px;width:43.64px;height:13.62px;line-height:12.57px;background:rgb(2,215,66)">2758</div>
<div class="c s" style="left:671.70px;top:794.23px;width:43.64px;height:13.62px;line-height:12.57px;background:rgb(2,215,67)">2780</div>
<div class="c s" style="left:715.29px;top:794.23px;width:43.64px;height:13.62px;line-height:12.57px;background:rgb(2,215,67)">2787</div>
<div class="c s" style="left:758.87px;top:794.23px;width:43.64px;height:13.62px;line-height:12.57px;background:rgb(2,215,67)">2794</div>
<div class="c s" style="left:802.46px;top:794.23px;width:43.64px;height:13.62px;line-height:12.57px;background:rgb(2,215,67)">2808</div>
<div class="c s" style="left:846.04px;top:794.23px;width:43.64px;height:13.62px;line-height:12.57px;background:rgb(2,216,67)">2829</div>
<div class="c s" style="left:889.63px;top:794.23px;width:43.64px;height:13.62px;line-height:12.57px;background:rgb(2,216,67)">2843</div>
<div class="c s" style="left:933.21px;top:794.23px;width:43.64px;height:13.62px;line-height:12.57px;background:rgb(2,216,67)">2858</div>
<div style="position:absolute;left:5px;top:644.5px;width:972.4px;height:1.2px;background:repeating-linear-gradient(to right,#f6f6f6 0,#f6f6f6 2.6px,rgba(246,246,246,0) 2.6px,rgba(246,246,246,0) 4.2px);"></div>
<div style="position:absolute;left:5px;top:807.8px;width:973px;height:2.2px;background:#050520;"></div>
<svg style="position:absolute;left:723.4px;top:485.2px" width="13" height="9" viewBox="0 0 13 9"><g fill="none" stroke="#b8b8cc" stroke-width=".8"><ellipse cx="6.4" cy="2.9" rx="5.2" ry="2.1" fill="#55556e"/><path d="M1.2 2.9v2.6c0 1.2 2.3 2.1 5.2 2.1s5.2-.9 5.2-2.1V2.9"/><path d="M1.2 4.4c0 1.2 2.3 2.1 5.2 2.1s5.2-.9 5.2-2.1" stroke-width=".6"/><ellipse cx="6.4" cy="2.8" rx="2.6" ry=".9" stroke-width=".5"/></g></svg>
</div></body></html>
